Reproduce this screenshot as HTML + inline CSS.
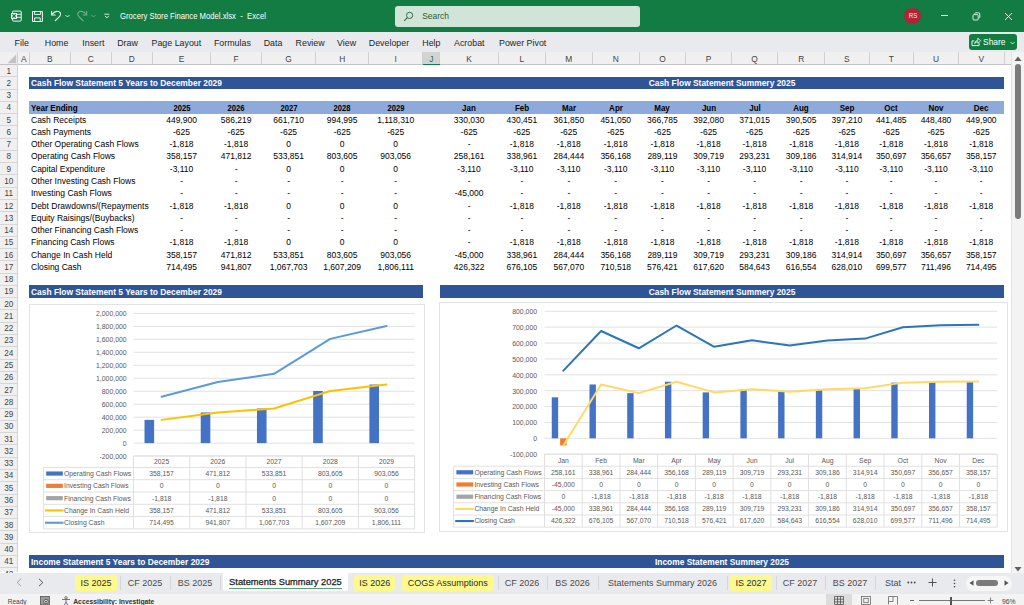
<!DOCTYPE html>
<html><head><meta charset="utf-8"><style>
html,body{margin:0;padding:0}
body{width:1024px;height:605px;overflow:hidden;position:relative;background:#fff;font-family:"Liberation Sans", sans-serif}
.t{position:absolute;white-space:nowrap;line-height:12px}
</style></head><body>
<div style="position:absolute;left:0.00px;top:0.00px;width:1024.00px;height:31.70px;background:#137c42"></div>
<svg style="position:absolute;left:10px;top:10px" width="12" height="12" viewBox="0 0 12 12">
<rect x="2.6" y="1.1" width="8.6" height="10" rx="0.9" fill="none" stroke="#fff" stroke-width="0.95"/>
<line x1="6.8" y1="4.3" x2="11.1" y2="4.3" stroke="#fff" stroke-width="0.9"/><line x1="6.8" y1="7.3" x2="11.1" y2="7.3" stroke="#fff" stroke-width="0.9"/>
<rect x="1" y="3" width="6.1" height="5.9" fill="#fff"/>
<path d="M2.3 4.1 L5.8 7.8 M5.8 4.1 L2.3 7.8" stroke="#137c42" stroke-width="1.3"/>
</svg>
<svg style="position:absolute;left:32px;top:10.5px" width="11" height="11" viewBox="0 0 11 11">
<path d="M0.5 0.5 H10.4 V10.5 H0.5 Z" fill="none" stroke="#fff" stroke-width="0.95"/>
<path d="M2.5 0.5 V3.4 H8.6 V0.5" fill="none" stroke="#fff" stroke-width="0.9"/>
<path d="M2.6 10.5 V6.9 H8.2 V10.5" fill="none" stroke="#fff" stroke-width="0.9"/>
</svg>
<svg style="position:absolute;left:50px;top:9px" width="13" height="13" viewBox="0 0 13 13">
<path d="M1.6 2.1 V6 H5.6" fill="none" stroke="#fff" stroke-width="1.05"/>
<path d="M2.3 5.3 C4.3 1.7 9.6 1.3 10.5 4.6 C10.8 5.7 10.3 6.6 9.7 7.3 L4.9 12" fill="none" stroke="#fff" stroke-width="1.05"/>
</svg>
<svg style="position:absolute;left:65px;top:14px" width="5" height="4" viewBox="0 0 5 4"><path d="M0.5 1 L2.5 3 L4.5 1" fill="none" stroke="#fff" stroke-width="0.8"/></svg>
<svg style="position:absolute;left:76px;top:9px;opacity:0.42" width="13" height="13" viewBox="0 0 13 13">
<path d="M10.7 2.1 V6 H6.7" fill="none" stroke="#fff" stroke-width="1.05"/>
<path d="M10 5.3 C8 1.7 2.7 1.3 1.8 4.6 C1.5 5.7 2 6.6 2.6 7.3 L7.4 12" fill="none" stroke="#fff" stroke-width="1.05"/>
</svg>
<svg style="position:absolute;left:91px;top:14px;opacity:0.42" width="5" height="4" viewBox="0 0 5 4"><path d="M0.5 1 L2.5 3 L4.5 1" fill="none" stroke="#fff" stroke-width="0.8"/></svg>
<svg style="position:absolute;left:104px;top:13px" width="6" height="7" viewBox="0 0 6 7"><line x1="0.4" y1="1.2" x2="5.4" y2="1.2" stroke="#fff" stroke-width="0.8"/><path d="M1 2.9 L2.9 4.8 L4.8 2.9" fill="none" stroke="#fff" stroke-width="0.9"/></svg>
<div class="t" style="left:119.80px;top:10.00px;font-size:8.8px;color:#fff;font-weight:normal;transform:scaleX(0.875);transform-origin:0 0;line-height:12px">Grocery Store Finance Model.xlsx&nbsp;&nbsp;-&nbsp;&nbsp;Excel</div>
<div style="position:absolute;left:395.00px;top:5.50px;width:245.00px;height:21.00px;background:#d0e5d7;border-radius:3px"></div>
<svg style="position:absolute;left:403px;top:11px" width="11" height="11" viewBox="0 0 11 11"><circle cx="6.6" cy="4.4" r="3.1" fill="none" stroke="#2f6b45" stroke-width="1"/><line x1="4.4" y1="6.6" x2="1.2" y2="9.8" stroke="#2f6b45" stroke-width="1.1"/></svg>
<div class="t" style="left:422.20px;top:10.00px;font-size:8.46px;color:#2c5a3c;font-weight:normal;line-height:12px">Search</div>
<div style="position:absolute;left:904.4px;top:7.8px;width:16.2px;height:16.2px;border-radius:50%;background:#ad2637"></div>
<div class="t" style="left:902.50px;top:10.20px;width:20px;text-align:center;font-size:7.2px;color:#fbeef0;font-weight:normal;transform:scaleX(0.85);transform-origin:50% 0;line-height:12px">RS</div>
<div style="position:absolute;left:941.20px;top:15.20px;width:6.80px;height:0.90px;background:#fff"></div>
<svg style="position:absolute;left:972px;top:12px" width="9" height="9" viewBox="0 0 9 9"><rect x="1" y="2.6" width="5.2" height="5.4" rx="1" fill="none" stroke="#fff" stroke-width="0.85"/><path d="M2.6 1.6 Q2.8 0.8 3.8 0.8 H6.6 Q7.8 0.8 7.8 2 V5 Q7.8 6 7.2 6.3" fill="none" stroke="#fff" stroke-width="0.85"/></svg>
<svg style="position:absolute;left:1004px;top:12px" width="9" height="9" viewBox="0 0 9 9"><path d="M1 1 L8 8 M8 1 L1 8" stroke="#fff" stroke-width="0.9"/></svg>
<div style="position:absolute;left:0.00px;top:31.70px;width:1024.00px;height:20.50px;background:#e9eaed"></div>
<div class="t" style="left:14.60px;top:36.60px;font-size:8.87px;color:#262626;font-weight:normal;line-height:12px">File</div>
<div class="t" style="left:44.80px;top:36.60px;font-size:8.87px;color:#262626;font-weight:normal;line-height:12px">Home</div>
<div class="t" style="left:82.30px;top:36.60px;font-size:8.87px;color:#262626;font-weight:normal;line-height:12px">Insert</div>
<div class="t" style="left:117.20px;top:36.60px;font-size:8.87px;color:#262626;font-weight:normal;line-height:12px">Draw</div>
<div class="t" style="left:151.50px;top:36.60px;font-size:8.87px;color:#262626;font-weight:normal;line-height:12px">Page Layout</div>
<div class="t" style="left:213.90px;top:36.60px;font-size:8.87px;color:#262626;font-weight:normal;line-height:12px">Formulas</div>
<div class="t" style="left:263.70px;top:36.60px;font-size:8.87px;color:#262626;font-weight:normal;line-height:12px">Data</div>
<div class="t" style="left:295.60px;top:36.60px;font-size:8.87px;color:#262626;font-weight:normal;line-height:12px">Review</div>
<div class="t" style="left:337.00px;top:36.60px;font-size:8.87px;color:#262626;font-weight:normal;line-height:12px">View</div>
<div class="t" style="left:368.80px;top:36.60px;font-size:8.87px;color:#262626;font-weight:normal;line-height:12px">Developer</div>
<div class="t" style="left:422.30px;top:36.60px;font-size:8.87px;color:#262626;font-weight:normal;line-height:12px">Help</div>
<div class="t" style="left:454.00px;top:36.60px;font-size:8.87px;color:#262626;font-weight:normal;line-height:12px">Acrobat</div>
<div class="t" style="left:499.00px;top:36.60px;font-size:8.87px;color:#262626;font-weight:normal;line-height:12px">Power Pivot</div>
<div style="position:absolute;left:969.00px;top:34.00px;width:47.70px;height:16.00px;background:#107c41;border-radius:3px"></div>
<svg style="position:absolute;left:970px;top:36px" width="12" height="12" viewBox="0 0 12 12"><path d="M2 4.9 H4.3 M2 4.9 V9.6 H9.1 V7.2" fill="none" stroke="#fff" stroke-width="0.9"/><path d="M4.6 7.6 Q5.2 4.7 7.9 4.1 V2.2 L10.6 4.9 L7.9 7.4 V5.6 Q5.9 5.8 4.6 7.6 Z" fill="none" stroke="#fff" stroke-width="0.85" stroke-linejoin="round"/></svg>
<div class="t" style="left:983.00px;top:36.30px;font-size:9.2px;color:#fff;font-weight:normal;transform:scaleX(0.92);transform-origin:0 0;line-height:12px">Share</div>
<svg style="position:absolute;left:1010px;top:41px" width="5" height="4" viewBox="0 0 5 4"><path d="M0.5 1 L2.5 3 L4.5 1" fill="none" stroke="#fff" stroke-width="0.8"/></svg>
<div style="position:absolute;left:0.00px;top:52.00px;width:1011.00px;height:12.90px;background:#f0f0f0"></div>
<div style="position:absolute;left:0.00px;top:64.10px;width:1011.00px;height:0.90px;background:#c4c4c4"></div>
<svg style="position:absolute;left:7px;top:54px" width="10" height="10" viewBox="0 0 10 10"><path d="M9.2 0.5 V9.2 H0.5 Z" fill="#c2c2c2"/></svg>
<div style="position:absolute;left:17.10px;top:52.00px;width:0.80px;height:520.00px;background:#d2d2d2"></div>
<div style="position:absolute;left:29.00px;top:52.00px;width:0.80px;height:12.20px;background:#d0d0d0"></div>
<div class="t" style="left:-6.30px;top:52.60px;width:60px;text-align:center;font-size:8.4px;color:#444;font-weight:normal;line-height:12px">A</div>
<div style="position:absolute;left:69.90px;top:52.00px;width:0.80px;height:12.20px;background:#d0d0d0"></div>
<div class="t" style="left:19.85px;top:52.60px;width:60px;text-align:center;font-size:8.4px;color:#444;font-weight:normal;line-height:12px">B</div>
<div style="position:absolute;left:110.80px;top:52.00px;width:0.80px;height:12.20px;background:#d0d0d0"></div>
<div class="t" style="left:60.75px;top:52.60px;width:60px;text-align:center;font-size:8.4px;color:#444;font-weight:normal;line-height:12px">C</div>
<div style="position:absolute;left:152.10px;top:52.00px;width:0.80px;height:12.20px;background:#d0d0d0"></div>
<div class="t" style="left:101.85px;top:52.60px;width:60px;text-align:center;font-size:8.4px;color:#444;font-weight:normal;line-height:12px">D</div>
<div style="position:absolute;left:210.20px;top:52.00px;width:0.80px;height:12.20px;background:#d0d0d0"></div>
<div class="t" style="left:151.55px;top:52.60px;width:60px;text-align:center;font-size:8.4px;color:#444;font-weight:normal;line-height:12px">E</div>
<div style="position:absolute;left:261.20px;top:52.00px;width:0.80px;height:12.20px;background:#d0d0d0"></div>
<div class="t" style="left:206.10px;top:52.60px;width:60px;text-align:center;font-size:8.4px;color:#444;font-weight:normal;line-height:12px">F</div>
<div style="position:absolute;left:315.20px;top:52.00px;width:0.80px;height:12.20px;background:#d0d0d0"></div>
<div class="t" style="left:258.60px;top:52.60px;width:60px;text-align:center;font-size:8.4px;color:#444;font-weight:normal;line-height:12px">G</div>
<div style="position:absolute;left:368.35px;top:52.00px;width:0.80px;height:12.20px;background:#d0d0d0"></div>
<div class="t" style="left:312.18px;top:52.60px;width:60px;text-align:center;font-size:8.4px;color:#444;font-weight:normal;line-height:12px">H</div>
<div style="position:absolute;left:422.30px;top:52.00px;width:0.80px;height:12.20px;background:#d0d0d0"></div>
<div class="t" style="left:365.73px;top:52.60px;width:60px;text-align:center;font-size:8.4px;color:#444;font-weight:normal;line-height:12px">I</div>
<div style="position:absolute;left:422.70px;top:52.00px;width:17.10px;height:12.20px;background:#d3d3d3"></div>
<div style="position:absolute;left:422.70px;top:63.80px;width:17.10px;height:1.20px;background:#107c41"></div>
<div style="position:absolute;left:439.40px;top:52.00px;width:0.80px;height:12.20px;background:#d0d0d0"></div>
<div class="t" style="left:401.25px;top:52.60px;width:60px;text-align:center;font-size:8.4px;color:#3b6e4c;font-weight:normal;line-height:12px">J</div>
<div style="position:absolute;left:498.00px;top:52.00px;width:0.80px;height:12.20px;background:#d0d0d0"></div>
<div class="t" style="left:439.10px;top:52.60px;width:60px;text-align:center;font-size:8.4px;color:#444;font-weight:normal;line-height:12px">K</div>
<div style="position:absolute;left:544.90px;top:52.00px;width:0.80px;height:12.20px;background:#d0d0d0"></div>
<div class="t" style="left:491.85px;top:52.60px;width:60px;text-align:center;font-size:8.4px;color:#444;font-weight:normal;line-height:12px">L</div>
<div style="position:absolute;left:591.90px;top:52.00px;width:0.80px;height:12.20px;background:#d0d0d0"></div>
<div class="t" style="left:538.80px;top:52.60px;width:60px;text-align:center;font-size:8.4px;color:#444;font-weight:normal;line-height:12px">M</div>
<div style="position:absolute;left:638.80px;top:52.00px;width:0.80px;height:12.20px;background:#d0d0d0"></div>
<div class="t" style="left:585.75px;top:52.60px;width:60px;text-align:center;font-size:8.4px;color:#444;font-weight:normal;line-height:12px">N</div>
<div style="position:absolute;left:685.30px;top:52.00px;width:0.80px;height:12.20px;background:#d0d0d0"></div>
<div class="t" style="left:632.45px;top:52.60px;width:60px;text-align:center;font-size:8.4px;color:#444;font-weight:normal;line-height:12px">O</div>
<div style="position:absolute;left:731.10px;top:52.00px;width:0.80px;height:12.20px;background:#d0d0d0"></div>
<div class="t" style="left:678.60px;top:52.60px;width:60px;text-align:center;font-size:8.4px;color:#444;font-weight:normal;line-height:12px">P</div>
<div style="position:absolute;left:777.30px;top:52.00px;width:0.80px;height:12.20px;background:#d0d0d0"></div>
<div class="t" style="left:724.60px;top:52.60px;width:60px;text-align:center;font-size:8.4px;color:#444;font-weight:normal;line-height:12px">Q</div>
<div style="position:absolute;left:824.30px;top:52.00px;width:0.80px;height:12.20px;background:#d0d0d0"></div>
<div class="t" style="left:771.20px;top:52.60px;width:60px;text-align:center;font-size:8.4px;color:#444;font-weight:normal;line-height:12px">R</div>
<div style="position:absolute;left:868.70px;top:52.00px;width:0.80px;height:12.20px;background:#d0d0d0"></div>
<div class="t" style="left:816.90px;top:52.60px;width:60px;text-align:center;font-size:8.4px;color:#444;font-weight:normal;line-height:12px">S</div>
<div style="position:absolute;left:913.00px;top:52.00px;width:0.80px;height:12.20px;background:#d0d0d0"></div>
<div class="t" style="left:861.25px;top:52.60px;width:60px;text-align:center;font-size:8.4px;color:#444;font-weight:normal;line-height:12px">T</div>
<div style="position:absolute;left:958.20px;top:52.00px;width:0.80px;height:12.20px;background:#d0d0d0"></div>
<div class="t" style="left:906.00px;top:52.60px;width:60px;text-align:center;font-size:8.4px;color:#444;font-weight:normal;line-height:12px">U</div>
<div style="position:absolute;left:1003.50px;top:52.00px;width:0.80px;height:12.20px;background:#d0d0d0"></div>
<div class="t" style="left:951.25px;top:52.60px;width:60px;text-align:center;font-size:8.4px;color:#444;font-weight:normal;line-height:12px">V</div>
<div class="t" style="left:1001.95px;top:52.60px;width:60px;text-align:center;font-size:8.4px;color:#444;font-weight:normal;line-height:12px">W</div>
<div style="position:absolute;left:0.00px;top:64.90px;width:17.10px;height:507.10px;background:#f0f0f0"></div>
<div style="position:absolute;left:0.00px;top:76.32px;width:17.10px;height:0.80px;background:#d6d6d6"></div>
<div class="t" style="left:-6.20px;top:65.55px;width:30px;text-align:center;font-size:8.2px;color:#444;font-weight:normal;line-height:12px">1</div>
<div style="position:absolute;left:0.00px;top:88.59px;width:17.10px;height:0.80px;background:#d6d6d6"></div>
<div class="t" style="left:-6.20px;top:77.82px;width:30px;text-align:center;font-size:8.2px;color:#444;font-weight:normal;line-height:12px">2</div>
<div style="position:absolute;left:0.00px;top:100.86px;width:17.10px;height:0.80px;background:#d6d6d6"></div>
<div class="t" style="left:-6.20px;top:90.09px;width:30px;text-align:center;font-size:8.2px;color:#444;font-weight:normal;line-height:12px">3</div>
<div style="position:absolute;left:0.00px;top:113.13px;width:17.10px;height:0.80px;background:#d6d6d6"></div>
<div class="t" style="left:-6.20px;top:102.36px;width:30px;text-align:center;font-size:8.2px;color:#444;font-weight:normal;line-height:12px">4</div>
<div style="position:absolute;left:0.00px;top:125.40px;width:17.10px;height:0.80px;background:#d6d6d6"></div>
<div class="t" style="left:-6.20px;top:114.63px;width:30px;text-align:center;font-size:8.2px;color:#444;font-weight:normal;line-height:12px">5</div>
<div style="position:absolute;left:0.00px;top:137.67px;width:17.10px;height:0.80px;background:#d6d6d6"></div>
<div class="t" style="left:-6.20px;top:126.90px;width:30px;text-align:center;font-size:8.2px;color:#444;font-weight:normal;line-height:12px">6</div>
<div style="position:absolute;left:0.00px;top:149.94px;width:17.10px;height:0.80px;background:#d6d6d6"></div>
<div class="t" style="left:-6.20px;top:139.17px;width:30px;text-align:center;font-size:8.2px;color:#444;font-weight:normal;line-height:12px">7</div>
<div style="position:absolute;left:0.00px;top:162.21px;width:17.10px;height:0.80px;background:#d6d6d6"></div>
<div class="t" style="left:-6.20px;top:151.44px;width:30px;text-align:center;font-size:8.2px;color:#444;font-weight:normal;line-height:12px">8</div>
<div style="position:absolute;left:0.00px;top:174.48px;width:17.10px;height:0.80px;background:#d6d6d6"></div>
<div class="t" style="left:-6.20px;top:163.71px;width:30px;text-align:center;font-size:8.2px;color:#444;font-weight:normal;line-height:12px">9</div>
<div style="position:absolute;left:0.00px;top:186.75px;width:17.10px;height:0.80px;background:#d6d6d6"></div>
<div class="t" style="left:-6.20px;top:175.98px;width:30px;text-align:center;font-size:8.2px;color:#444;font-weight:normal;line-height:12px">10</div>
<div style="position:absolute;left:0.00px;top:199.02px;width:17.10px;height:0.80px;background:#d6d6d6"></div>
<div class="t" style="left:-6.20px;top:188.25px;width:30px;text-align:center;font-size:8.2px;color:#444;font-weight:normal;line-height:12px">11</div>
<div style="position:absolute;left:0.00px;top:211.29px;width:17.10px;height:0.80px;background:#d6d6d6"></div>
<div class="t" style="left:-6.20px;top:200.52px;width:30px;text-align:center;font-size:8.2px;color:#444;font-weight:normal;line-height:12px">12</div>
<div style="position:absolute;left:0.00px;top:223.56px;width:17.10px;height:0.80px;background:#d6d6d6"></div>
<div class="t" style="left:-6.20px;top:212.79px;width:30px;text-align:center;font-size:8.2px;color:#444;font-weight:normal;line-height:12px">13</div>
<div style="position:absolute;left:0.00px;top:235.83px;width:17.10px;height:0.80px;background:#d6d6d6"></div>
<div class="t" style="left:-6.20px;top:225.06px;width:30px;text-align:center;font-size:8.2px;color:#444;font-weight:normal;line-height:12px">14</div>
<div style="position:absolute;left:0.00px;top:248.10px;width:17.10px;height:0.80px;background:#d6d6d6"></div>
<div class="t" style="left:-6.20px;top:237.33px;width:30px;text-align:center;font-size:8.2px;color:#444;font-weight:normal;line-height:12px">15</div>
<div style="position:absolute;left:0.00px;top:260.37px;width:17.10px;height:0.80px;background:#d6d6d6"></div>
<div class="t" style="left:-6.20px;top:249.60px;width:30px;text-align:center;font-size:8.2px;color:#444;font-weight:normal;line-height:12px">16</div>
<div style="position:absolute;left:0.00px;top:272.64px;width:17.10px;height:0.80px;background:#d6d6d6"></div>
<div class="t" style="left:-6.20px;top:261.87px;width:30px;text-align:center;font-size:8.2px;color:#444;font-weight:normal;line-height:12px">17</div>
<div style="position:absolute;left:0.00px;top:284.91px;width:17.10px;height:0.80px;background:#d6d6d6"></div>
<div class="t" style="left:-6.20px;top:274.14px;width:30px;text-align:center;font-size:8.2px;color:#444;font-weight:normal;line-height:12px">18</div>
<div style="position:absolute;left:0.00px;top:297.18px;width:17.10px;height:0.80px;background:#d6d6d6"></div>
<div class="t" style="left:-6.20px;top:286.41px;width:30px;text-align:center;font-size:8.2px;color:#444;font-weight:normal;line-height:12px">19</div>
<div style="position:absolute;left:0.00px;top:309.45px;width:17.10px;height:0.80px;background:#d6d6d6"></div>
<div class="t" style="left:-6.20px;top:298.68px;width:30px;text-align:center;font-size:8.2px;color:#444;font-weight:normal;line-height:12px">20</div>
<div style="position:absolute;left:0.00px;top:321.72px;width:17.10px;height:0.80px;background:#d6d6d6"></div>
<div class="t" style="left:-6.20px;top:310.95px;width:30px;text-align:center;font-size:8.2px;color:#444;font-weight:normal;line-height:12px">21</div>
<div style="position:absolute;left:0.00px;top:333.99px;width:17.10px;height:0.80px;background:#d6d6d6"></div>
<div class="t" style="left:-6.20px;top:323.22px;width:30px;text-align:center;font-size:8.2px;color:#444;font-weight:normal;line-height:12px">22</div>
<div style="position:absolute;left:0.00px;top:346.26px;width:17.10px;height:0.80px;background:#d6d6d6"></div>
<div class="t" style="left:-6.20px;top:335.49px;width:30px;text-align:center;font-size:8.2px;color:#444;font-weight:normal;line-height:12px">23</div>
<div style="position:absolute;left:0.00px;top:358.53px;width:17.10px;height:0.80px;background:#d6d6d6"></div>
<div class="t" style="left:-6.20px;top:347.76px;width:30px;text-align:center;font-size:8.2px;color:#444;font-weight:normal;line-height:12px">24</div>
<div style="position:absolute;left:0.00px;top:370.80px;width:17.10px;height:0.80px;background:#d6d6d6"></div>
<div class="t" style="left:-6.20px;top:360.03px;width:30px;text-align:center;font-size:8.2px;color:#444;font-weight:normal;line-height:12px">25</div>
<div style="position:absolute;left:0.00px;top:383.07px;width:17.10px;height:0.80px;background:#d6d6d6"></div>
<div class="t" style="left:-6.20px;top:372.30px;width:30px;text-align:center;font-size:8.2px;color:#444;font-weight:normal;line-height:12px">26</div>
<div style="position:absolute;left:0.00px;top:395.34px;width:17.10px;height:0.80px;background:#d6d6d6"></div>
<div class="t" style="left:-6.20px;top:384.57px;width:30px;text-align:center;font-size:8.2px;color:#444;font-weight:normal;line-height:12px">27</div>
<div style="position:absolute;left:0.00px;top:407.61px;width:17.10px;height:0.80px;background:#d6d6d6"></div>
<div class="t" style="left:-6.20px;top:396.84px;width:30px;text-align:center;font-size:8.2px;color:#444;font-weight:normal;line-height:12px">28</div>
<div style="position:absolute;left:0.00px;top:419.88px;width:17.10px;height:0.80px;background:#d6d6d6"></div>
<div class="t" style="left:-6.20px;top:409.11px;width:30px;text-align:center;font-size:8.2px;color:#444;font-weight:normal;line-height:12px">29</div>
<div style="position:absolute;left:0.00px;top:432.15px;width:17.10px;height:0.80px;background:#d6d6d6"></div>
<div class="t" style="left:-6.20px;top:421.38px;width:30px;text-align:center;font-size:8.2px;color:#444;font-weight:normal;line-height:12px">30</div>
<div style="position:absolute;left:0.00px;top:444.42px;width:17.10px;height:0.80px;background:#d6d6d6"></div>
<div class="t" style="left:-6.20px;top:433.65px;width:30px;text-align:center;font-size:8.2px;color:#444;font-weight:normal;line-height:12px">31</div>
<div style="position:absolute;left:0.00px;top:456.69px;width:17.10px;height:0.80px;background:#d6d6d6"></div>
<div class="t" style="left:-6.20px;top:445.92px;width:30px;text-align:center;font-size:8.2px;color:#444;font-weight:normal;line-height:12px">32</div>
<div style="position:absolute;left:0.00px;top:468.96px;width:17.10px;height:0.80px;background:#d6d6d6"></div>
<div class="t" style="left:-6.20px;top:458.19px;width:30px;text-align:center;font-size:8.2px;color:#444;font-weight:normal;line-height:12px">33</div>
<div style="position:absolute;left:0.00px;top:481.23px;width:17.10px;height:0.80px;background:#d6d6d6"></div>
<div class="t" style="left:-6.20px;top:470.46px;width:30px;text-align:center;font-size:8.2px;color:#444;font-weight:normal;line-height:12px">34</div>
<div style="position:absolute;left:0.00px;top:493.50px;width:17.10px;height:0.80px;background:#d6d6d6"></div>
<div class="t" style="left:-6.20px;top:482.73px;width:30px;text-align:center;font-size:8.2px;color:#444;font-weight:normal;line-height:12px">35</div>
<div style="position:absolute;left:0.00px;top:505.77px;width:17.10px;height:0.80px;background:#d6d6d6"></div>
<div class="t" style="left:-6.20px;top:495.00px;width:30px;text-align:center;font-size:8.2px;color:#444;font-weight:normal;line-height:12px">36</div>
<div style="position:absolute;left:0.00px;top:518.04px;width:17.10px;height:0.80px;background:#d6d6d6"></div>
<div class="t" style="left:-6.20px;top:507.27px;width:30px;text-align:center;font-size:8.2px;color:#444;font-weight:normal;line-height:12px">37</div>
<div style="position:absolute;left:0.00px;top:530.31px;width:17.10px;height:0.80px;background:#d6d6d6"></div>
<div class="t" style="left:-6.20px;top:519.54px;width:30px;text-align:center;font-size:8.2px;color:#444;font-weight:normal;line-height:12px">38</div>
<div style="position:absolute;left:0.00px;top:542.58px;width:17.10px;height:0.80px;background:#d6d6d6"></div>
<div class="t" style="left:-6.20px;top:531.81px;width:30px;text-align:center;font-size:8.2px;color:#444;font-weight:normal;line-height:12px">39</div>
<div style="position:absolute;left:0.00px;top:554.85px;width:17.10px;height:0.80px;background:#d6d6d6"></div>
<div class="t" style="left:-6.20px;top:544.08px;width:30px;text-align:center;font-size:8.2px;color:#444;font-weight:normal;line-height:12px">40</div>
<div style="position:absolute;left:0.00px;top:567.12px;width:17.10px;height:0.80px;background:#d6d6d6"></div>
<div class="t" style="left:-6.20px;top:556.35px;width:30px;text-align:center;font-size:8.2px;color:#444;font-weight:normal;line-height:12px">41</div>
<div style="position:absolute;left:0.00px;top:579.39px;width:17.10px;height:0.80px;background:#d6d6d6"></div>
<div class="t" style="left:-6.20px;top:568.62px;width:30px;text-align:center;font-size:8.2px;color:#444;font-weight:normal;line-height:12px">42</div>
<div style="position:absolute;left:29.40px;top:76.82px;width:974.50px;height:12.27px;background:#2f5597"></div>
<div class="t" style="left:30.90px;top:77.22px;font-size:9.2px;color:#fff;font-weight:bold;transform:scaleX(0.915);transform-origin:0 0;line-height:12px">Cash Flow Statement 5 Years to December 2029</div>
<div class="t" style="left:571.85px;top:77.22px;width:300px;text-align:center;font-size:9.2px;color:#fff;font-weight:bold;transform:scaleX(0.915);transform-origin:50% 0;line-height:12px">Cash Flow Statement Summery 2025</div>
<div style="position:absolute;left:29.40px;top:101.36px;width:974.50px;height:12.27px;background:#8eaadb"></div>
<div class="t" style="left:31.00px;top:102.16px;font-size:8.9px;color:#000;font-weight:bold;line-height:12px;transform:scaleX(0.91);transform-origin:0 0">Year Ending</div>
<div class="t" style="left:151.55px;top:102.16px;width:60px;text-align:center;font-size:8.9px;color:#000;font-weight:bold;line-height:12px;transform:scaleX(0.86)">2025</div>
<div class="t" style="left:206.10px;top:102.16px;width:60px;text-align:center;font-size:8.9px;color:#000;font-weight:bold;line-height:12px;transform:scaleX(0.86)">2026</div>
<div class="t" style="left:258.60px;top:102.16px;width:60px;text-align:center;font-size:8.9px;color:#000;font-weight:bold;line-height:12px;transform:scaleX(0.86)">2027</div>
<div class="t" style="left:312.18px;top:102.16px;width:60px;text-align:center;font-size:8.9px;color:#000;font-weight:bold;line-height:12px;transform:scaleX(0.86)">2028</div>
<div class="t" style="left:365.73px;top:102.16px;width:60px;text-align:center;font-size:8.9px;color:#000;font-weight:bold;line-height:12px;transform:scaleX(0.86)">2029</div>
<div class="t" style="left:439.10px;top:102.16px;width:60px;text-align:center;font-size:8.9px;color:#000;font-weight:bold;line-height:12px;transform:scaleX(0.9)">Jan</div>
<div class="t" style="left:491.85px;top:102.16px;width:60px;text-align:center;font-size:8.9px;color:#000;font-weight:bold;line-height:12px;transform:scaleX(0.9)">Feb</div>
<div class="t" style="left:538.80px;top:102.16px;width:60px;text-align:center;font-size:8.9px;color:#000;font-weight:bold;line-height:12px;transform:scaleX(0.9)">Mar</div>
<div class="t" style="left:585.75px;top:102.16px;width:60px;text-align:center;font-size:8.9px;color:#000;font-weight:bold;line-height:12px;transform:scaleX(0.9)">Apr</div>
<div class="t" style="left:632.45px;top:102.16px;width:60px;text-align:center;font-size:8.9px;color:#000;font-weight:bold;line-height:12px;transform:scaleX(0.9)">May</div>
<div class="t" style="left:678.60px;top:102.16px;width:60px;text-align:center;font-size:8.9px;color:#000;font-weight:bold;line-height:12px;transform:scaleX(0.9)">Jun</div>
<div class="t" style="left:724.60px;top:102.16px;width:60px;text-align:center;font-size:8.9px;color:#000;font-weight:bold;line-height:12px;transform:scaleX(0.9)">Jul</div>
<div class="t" style="left:771.20px;top:102.16px;width:60px;text-align:center;font-size:8.9px;color:#000;font-weight:bold;line-height:12px;transform:scaleX(0.9)">Aug</div>
<div class="t" style="left:816.90px;top:102.16px;width:60px;text-align:center;font-size:8.9px;color:#000;font-weight:bold;line-height:12px;transform:scaleX(0.9)">Sep</div>
<div class="t" style="left:861.25px;top:102.16px;width:60px;text-align:center;font-size:8.9px;color:#000;font-weight:bold;line-height:12px;transform:scaleX(0.9)">Oct</div>
<div class="t" style="left:906.00px;top:102.16px;width:60px;text-align:center;font-size:8.9px;color:#000;font-weight:bold;line-height:12px;transform:scaleX(0.9)">Nov</div>
<div class="t" style="left:951.25px;top:102.16px;width:60px;text-align:center;font-size:8.9px;color:#000;font-weight:bold;line-height:12px;transform:scaleX(0.9)">Dec</div>
<div class="t" style="left:31.00px;top:113.68px;font-size:8.5px;color:#000;font-weight:normal;line-height:12px">Cash Receipts</div>
<div class="t" style="left:151.55px;top:113.68px;width:60px;text-align:center;font-size:8.5px;color:#000;font-weight:normal;line-height:12px">449,900</div>
<div class="t" style="left:206.10px;top:113.68px;width:60px;text-align:center;font-size:8.5px;color:#000;font-weight:normal;line-height:12px">586,219</div>
<div class="t" style="left:258.60px;top:113.68px;width:60px;text-align:center;font-size:8.5px;color:#000;font-weight:normal;line-height:12px">661,710</div>
<div class="t" style="left:312.18px;top:113.68px;width:60px;text-align:center;font-size:8.5px;color:#000;font-weight:normal;line-height:12px">994,995</div>
<div class="t" style="left:365.73px;top:113.68px;width:60px;text-align:center;font-size:8.5px;color:#000;font-weight:normal;line-height:12px">1,118,310</div>
<div class="t" style="left:439.10px;top:113.68px;width:60px;text-align:center;font-size:8.5px;color:#000;font-weight:normal;line-height:12px">330,030</div>
<div class="t" style="left:491.85px;top:113.68px;width:60px;text-align:center;font-size:8.5px;color:#000;font-weight:normal;line-height:12px">430,451</div>
<div class="t" style="left:538.80px;top:113.68px;width:60px;text-align:center;font-size:8.5px;color:#000;font-weight:normal;line-height:12px">361,850</div>
<div class="t" style="left:585.75px;top:113.68px;width:60px;text-align:center;font-size:8.5px;color:#000;font-weight:normal;line-height:12px">451,050</div>
<div class="t" style="left:632.45px;top:113.68px;width:60px;text-align:center;font-size:8.5px;color:#000;font-weight:normal;line-height:12px">366,785</div>
<div class="t" style="left:678.60px;top:113.68px;width:60px;text-align:center;font-size:8.5px;color:#000;font-weight:normal;line-height:12px">392,080</div>
<div class="t" style="left:724.60px;top:113.68px;width:60px;text-align:center;font-size:8.5px;color:#000;font-weight:normal;line-height:12px">371,015</div>
<div class="t" style="left:771.20px;top:113.68px;width:60px;text-align:center;font-size:8.5px;color:#000;font-weight:normal;line-height:12px">390,505</div>
<div class="t" style="left:816.90px;top:113.68px;width:60px;text-align:center;font-size:8.5px;color:#000;font-weight:normal;line-height:12px">397,210</div>
<div class="t" style="left:861.25px;top:113.68px;width:60px;text-align:center;font-size:8.5px;color:#000;font-weight:normal;line-height:12px">441,485</div>
<div class="t" style="left:906.00px;top:113.68px;width:60px;text-align:center;font-size:8.5px;color:#000;font-weight:normal;line-height:12px">448,480</div>
<div class="t" style="left:951.25px;top:113.68px;width:60px;text-align:center;font-size:8.5px;color:#000;font-weight:normal;line-height:12px">449,900</div>
<div class="t" style="left:31.00px;top:125.95px;font-size:8.5px;color:#000;font-weight:normal;line-height:12px">Cash Payments</div>
<div class="t" style="left:151.55px;top:125.95px;width:60px;text-align:center;font-size:8.5px;color:#000;font-weight:normal;line-height:12px">-625</div>
<div class="t" style="left:206.10px;top:125.95px;width:60px;text-align:center;font-size:8.5px;color:#000;font-weight:normal;line-height:12px">-625</div>
<div class="t" style="left:258.60px;top:125.95px;width:60px;text-align:center;font-size:8.5px;color:#000;font-weight:normal;line-height:12px">-625</div>
<div class="t" style="left:312.18px;top:125.95px;width:60px;text-align:center;font-size:8.5px;color:#000;font-weight:normal;line-height:12px">-625</div>
<div class="t" style="left:365.73px;top:125.95px;width:60px;text-align:center;font-size:8.5px;color:#000;font-weight:normal;line-height:12px">-625</div>
<div class="t" style="left:439.10px;top:125.95px;width:60px;text-align:center;font-size:8.5px;color:#000;font-weight:normal;line-height:12px">-625</div>
<div class="t" style="left:491.85px;top:125.95px;width:60px;text-align:center;font-size:8.5px;color:#000;font-weight:normal;line-height:12px">-625</div>
<div class="t" style="left:538.80px;top:125.95px;width:60px;text-align:center;font-size:8.5px;color:#000;font-weight:normal;line-height:12px">-625</div>
<div class="t" style="left:585.75px;top:125.95px;width:60px;text-align:center;font-size:8.5px;color:#000;font-weight:normal;line-height:12px">-625</div>
<div class="t" style="left:632.45px;top:125.95px;width:60px;text-align:center;font-size:8.5px;color:#000;font-weight:normal;line-height:12px">-625</div>
<div class="t" style="left:678.60px;top:125.95px;width:60px;text-align:center;font-size:8.5px;color:#000;font-weight:normal;line-height:12px">-625</div>
<div class="t" style="left:724.60px;top:125.95px;width:60px;text-align:center;font-size:8.5px;color:#000;font-weight:normal;line-height:12px">-625</div>
<div class="t" style="left:771.20px;top:125.95px;width:60px;text-align:center;font-size:8.5px;color:#000;font-weight:normal;line-height:12px">-625</div>
<div class="t" style="left:816.90px;top:125.95px;width:60px;text-align:center;font-size:8.5px;color:#000;font-weight:normal;line-height:12px">-625</div>
<div class="t" style="left:861.25px;top:125.95px;width:60px;text-align:center;font-size:8.5px;color:#000;font-weight:normal;line-height:12px">-625</div>
<div class="t" style="left:906.00px;top:125.95px;width:60px;text-align:center;font-size:8.5px;color:#000;font-weight:normal;line-height:12px">-625</div>
<div class="t" style="left:951.25px;top:125.95px;width:60px;text-align:center;font-size:8.5px;color:#000;font-weight:normal;line-height:12px">-625</div>
<div class="t" style="left:31.00px;top:138.22px;font-size:8.5px;color:#000;font-weight:normal;line-height:12px">Other Operating Cash Flows</div>
<div class="t" style="left:151.55px;top:138.22px;width:60px;text-align:center;font-size:8.5px;color:#000;font-weight:normal;line-height:12px">-1,818</div>
<div class="t" style="left:206.10px;top:138.22px;width:60px;text-align:center;font-size:8.5px;color:#000;font-weight:normal;line-height:12px">-1,818</div>
<div class="t" style="left:258.60px;top:138.22px;width:60px;text-align:center;font-size:8.5px;color:#000;font-weight:normal;line-height:12px">0</div>
<div class="t" style="left:312.18px;top:138.22px;width:60px;text-align:center;font-size:8.5px;color:#000;font-weight:normal;line-height:12px">0</div>
<div class="t" style="left:365.73px;top:138.22px;width:60px;text-align:center;font-size:8.5px;color:#000;font-weight:normal;line-height:12px">0</div>
<div class="t" style="left:439.10px;top:138.22px;width:60px;text-align:center;font-size:8.5px;color:#000;font-weight:normal;line-height:12px">-</div>
<div class="t" style="left:491.85px;top:138.22px;width:60px;text-align:center;font-size:8.5px;color:#000;font-weight:normal;line-height:12px">-1,818</div>
<div class="t" style="left:538.80px;top:138.22px;width:60px;text-align:center;font-size:8.5px;color:#000;font-weight:normal;line-height:12px">-1,818</div>
<div class="t" style="left:585.75px;top:138.22px;width:60px;text-align:center;font-size:8.5px;color:#000;font-weight:normal;line-height:12px">-1,818</div>
<div class="t" style="left:632.45px;top:138.22px;width:60px;text-align:center;font-size:8.5px;color:#000;font-weight:normal;line-height:12px">-1,818</div>
<div class="t" style="left:678.60px;top:138.22px;width:60px;text-align:center;font-size:8.5px;color:#000;font-weight:normal;line-height:12px">-1,818</div>
<div class="t" style="left:724.60px;top:138.22px;width:60px;text-align:center;font-size:8.5px;color:#000;font-weight:normal;line-height:12px">-1,818</div>
<div class="t" style="left:771.20px;top:138.22px;width:60px;text-align:center;font-size:8.5px;color:#000;font-weight:normal;line-height:12px">-1,818</div>
<div class="t" style="left:816.90px;top:138.22px;width:60px;text-align:center;font-size:8.5px;color:#000;font-weight:normal;line-height:12px">-1,818</div>
<div class="t" style="left:861.25px;top:138.22px;width:60px;text-align:center;font-size:8.5px;color:#000;font-weight:normal;line-height:12px">-1,818</div>
<div class="t" style="left:906.00px;top:138.22px;width:60px;text-align:center;font-size:8.5px;color:#000;font-weight:normal;line-height:12px">-1,818</div>
<div class="t" style="left:951.25px;top:138.22px;width:60px;text-align:center;font-size:8.5px;color:#000;font-weight:normal;line-height:12px">-1,818</div>
<div class="t" style="left:31.00px;top:150.49px;font-size:8.5px;color:#000;font-weight:normal;line-height:12px">Operating Cash Flows</div>
<div class="t" style="left:151.55px;top:150.49px;width:60px;text-align:center;font-size:8.5px;color:#000;font-weight:normal;line-height:12px">358,157</div>
<div class="t" style="left:206.10px;top:150.49px;width:60px;text-align:center;font-size:8.5px;color:#000;font-weight:normal;line-height:12px">471,812</div>
<div class="t" style="left:258.60px;top:150.49px;width:60px;text-align:center;font-size:8.5px;color:#000;font-weight:normal;line-height:12px">533,851</div>
<div class="t" style="left:312.18px;top:150.49px;width:60px;text-align:center;font-size:8.5px;color:#000;font-weight:normal;line-height:12px">803,605</div>
<div class="t" style="left:365.73px;top:150.49px;width:60px;text-align:center;font-size:8.5px;color:#000;font-weight:normal;line-height:12px">903,056</div>
<div class="t" style="left:439.10px;top:150.49px;width:60px;text-align:center;font-size:8.5px;color:#000;font-weight:normal;line-height:12px">258,161</div>
<div class="t" style="left:491.85px;top:150.49px;width:60px;text-align:center;font-size:8.5px;color:#000;font-weight:normal;line-height:12px">338,961</div>
<div class="t" style="left:538.80px;top:150.49px;width:60px;text-align:center;font-size:8.5px;color:#000;font-weight:normal;line-height:12px">284,444</div>
<div class="t" style="left:585.75px;top:150.49px;width:60px;text-align:center;font-size:8.5px;color:#000;font-weight:normal;line-height:12px">356,168</div>
<div class="t" style="left:632.45px;top:150.49px;width:60px;text-align:center;font-size:8.5px;color:#000;font-weight:normal;line-height:12px">289,119</div>
<div class="t" style="left:678.60px;top:150.49px;width:60px;text-align:center;font-size:8.5px;color:#000;font-weight:normal;line-height:12px">309,719</div>
<div class="t" style="left:724.60px;top:150.49px;width:60px;text-align:center;font-size:8.5px;color:#000;font-weight:normal;line-height:12px">293,231</div>
<div class="t" style="left:771.20px;top:150.49px;width:60px;text-align:center;font-size:8.5px;color:#000;font-weight:normal;line-height:12px">309,186</div>
<div class="t" style="left:816.90px;top:150.49px;width:60px;text-align:center;font-size:8.5px;color:#000;font-weight:normal;line-height:12px">314,914</div>
<div class="t" style="left:861.25px;top:150.49px;width:60px;text-align:center;font-size:8.5px;color:#000;font-weight:normal;line-height:12px">350,697</div>
<div class="t" style="left:906.00px;top:150.49px;width:60px;text-align:center;font-size:8.5px;color:#000;font-weight:normal;line-height:12px">356,657</div>
<div class="t" style="left:951.25px;top:150.49px;width:60px;text-align:center;font-size:8.5px;color:#000;font-weight:normal;line-height:12px">358,157</div>
<div class="t" style="left:31.00px;top:162.76px;font-size:8.5px;color:#000;font-weight:normal;line-height:12px">Capital Expenditure</div>
<div class="t" style="left:151.55px;top:162.76px;width:60px;text-align:center;font-size:8.5px;color:#000;font-weight:normal;line-height:12px">-3,110</div>
<div class="t" style="left:206.10px;top:162.76px;width:60px;text-align:center;font-size:8.5px;color:#000;font-weight:normal;line-height:12px">-</div>
<div class="t" style="left:258.60px;top:162.76px;width:60px;text-align:center;font-size:8.5px;color:#000;font-weight:normal;line-height:12px">0</div>
<div class="t" style="left:312.18px;top:162.76px;width:60px;text-align:center;font-size:8.5px;color:#000;font-weight:normal;line-height:12px">0</div>
<div class="t" style="left:365.73px;top:162.76px;width:60px;text-align:center;font-size:8.5px;color:#000;font-weight:normal;line-height:12px">0</div>
<div class="t" style="left:439.10px;top:162.76px;width:60px;text-align:center;font-size:8.5px;color:#000;font-weight:normal;line-height:12px">-3,110</div>
<div class="t" style="left:491.85px;top:162.76px;width:60px;text-align:center;font-size:8.5px;color:#000;font-weight:normal;line-height:12px">-3,110</div>
<div class="t" style="left:538.80px;top:162.76px;width:60px;text-align:center;font-size:8.5px;color:#000;font-weight:normal;line-height:12px">-3,110</div>
<div class="t" style="left:585.75px;top:162.76px;width:60px;text-align:center;font-size:8.5px;color:#000;font-weight:normal;line-height:12px">-3,110</div>
<div class="t" style="left:632.45px;top:162.76px;width:60px;text-align:center;font-size:8.5px;color:#000;font-weight:normal;line-height:12px">-3,110</div>
<div class="t" style="left:678.60px;top:162.76px;width:60px;text-align:center;font-size:8.5px;color:#000;font-weight:normal;line-height:12px">-3,110</div>
<div class="t" style="left:724.60px;top:162.76px;width:60px;text-align:center;font-size:8.5px;color:#000;font-weight:normal;line-height:12px">-3,110</div>
<div class="t" style="left:771.20px;top:162.76px;width:60px;text-align:center;font-size:8.5px;color:#000;font-weight:normal;line-height:12px">-3,110</div>
<div class="t" style="left:816.90px;top:162.76px;width:60px;text-align:center;font-size:8.5px;color:#000;font-weight:normal;line-height:12px">-3,110</div>
<div class="t" style="left:861.25px;top:162.76px;width:60px;text-align:center;font-size:8.5px;color:#000;font-weight:normal;line-height:12px">-3,110</div>
<div class="t" style="left:906.00px;top:162.76px;width:60px;text-align:center;font-size:8.5px;color:#000;font-weight:normal;line-height:12px">-3,110</div>
<div class="t" style="left:951.25px;top:162.76px;width:60px;text-align:center;font-size:8.5px;color:#000;font-weight:normal;line-height:12px">-3,110</div>
<div class="t" style="left:31.00px;top:175.03px;font-size:8.5px;color:#000;font-weight:normal;line-height:12px">Other Investing Cash Flows</div>
<div class="t" style="left:151.55px;top:175.03px;width:60px;text-align:center;font-size:8.5px;color:#000;font-weight:normal;line-height:12px">-</div>
<div class="t" style="left:206.10px;top:175.03px;width:60px;text-align:center;font-size:8.5px;color:#000;font-weight:normal;line-height:12px">-</div>
<div class="t" style="left:258.60px;top:175.03px;width:60px;text-align:center;font-size:8.5px;color:#000;font-weight:normal;line-height:12px">-</div>
<div class="t" style="left:312.18px;top:175.03px;width:60px;text-align:center;font-size:8.5px;color:#000;font-weight:normal;line-height:12px">-</div>
<div class="t" style="left:365.73px;top:175.03px;width:60px;text-align:center;font-size:8.5px;color:#000;font-weight:normal;line-height:12px">-</div>
<div class="t" style="left:439.10px;top:175.03px;width:60px;text-align:center;font-size:8.5px;color:#000;font-weight:normal;line-height:12px">-</div>
<div class="t" style="left:491.85px;top:175.03px;width:60px;text-align:center;font-size:8.5px;color:#000;font-weight:normal;line-height:12px">-</div>
<div class="t" style="left:538.80px;top:175.03px;width:60px;text-align:center;font-size:8.5px;color:#000;font-weight:normal;line-height:12px">-</div>
<div class="t" style="left:585.75px;top:175.03px;width:60px;text-align:center;font-size:8.5px;color:#000;font-weight:normal;line-height:12px">-</div>
<div class="t" style="left:632.45px;top:175.03px;width:60px;text-align:center;font-size:8.5px;color:#000;font-weight:normal;line-height:12px">-</div>
<div class="t" style="left:678.60px;top:175.03px;width:60px;text-align:center;font-size:8.5px;color:#000;font-weight:normal;line-height:12px">-</div>
<div class="t" style="left:724.60px;top:175.03px;width:60px;text-align:center;font-size:8.5px;color:#000;font-weight:normal;line-height:12px">-</div>
<div class="t" style="left:771.20px;top:175.03px;width:60px;text-align:center;font-size:8.5px;color:#000;font-weight:normal;line-height:12px">-</div>
<div class="t" style="left:816.90px;top:175.03px;width:60px;text-align:center;font-size:8.5px;color:#000;font-weight:normal;line-height:12px">-</div>
<div class="t" style="left:861.25px;top:175.03px;width:60px;text-align:center;font-size:8.5px;color:#000;font-weight:normal;line-height:12px">-</div>
<div class="t" style="left:906.00px;top:175.03px;width:60px;text-align:center;font-size:8.5px;color:#000;font-weight:normal;line-height:12px">-</div>
<div class="t" style="left:951.25px;top:175.03px;width:60px;text-align:center;font-size:8.5px;color:#000;font-weight:normal;line-height:12px">-</div>
<div class="t" style="left:31.00px;top:187.30px;font-size:8.5px;color:#000;font-weight:normal;line-height:12px">Investing Cash Flows</div>
<div class="t" style="left:151.55px;top:187.30px;width:60px;text-align:center;font-size:8.5px;color:#000;font-weight:normal;line-height:12px">-</div>
<div class="t" style="left:206.10px;top:187.30px;width:60px;text-align:center;font-size:8.5px;color:#000;font-weight:normal;line-height:12px">-</div>
<div class="t" style="left:258.60px;top:187.30px;width:60px;text-align:center;font-size:8.5px;color:#000;font-weight:normal;line-height:12px">-</div>
<div class="t" style="left:312.18px;top:187.30px;width:60px;text-align:center;font-size:8.5px;color:#000;font-weight:normal;line-height:12px">-</div>
<div class="t" style="left:365.73px;top:187.30px;width:60px;text-align:center;font-size:8.5px;color:#000;font-weight:normal;line-height:12px">-</div>
<div class="t" style="left:439.10px;top:187.30px;width:60px;text-align:center;font-size:8.5px;color:#000;font-weight:normal;line-height:12px">-45,000</div>
<div class="t" style="left:491.85px;top:187.30px;width:60px;text-align:center;font-size:8.5px;color:#000;font-weight:normal;line-height:12px">-</div>
<div class="t" style="left:538.80px;top:187.30px;width:60px;text-align:center;font-size:8.5px;color:#000;font-weight:normal;line-height:12px">-</div>
<div class="t" style="left:585.75px;top:187.30px;width:60px;text-align:center;font-size:8.5px;color:#000;font-weight:normal;line-height:12px">-</div>
<div class="t" style="left:632.45px;top:187.30px;width:60px;text-align:center;font-size:8.5px;color:#000;font-weight:normal;line-height:12px">-</div>
<div class="t" style="left:678.60px;top:187.30px;width:60px;text-align:center;font-size:8.5px;color:#000;font-weight:normal;line-height:12px">-</div>
<div class="t" style="left:724.60px;top:187.30px;width:60px;text-align:center;font-size:8.5px;color:#000;font-weight:normal;line-height:12px">-</div>
<div class="t" style="left:771.20px;top:187.30px;width:60px;text-align:center;font-size:8.5px;color:#000;font-weight:normal;line-height:12px">-</div>
<div class="t" style="left:816.90px;top:187.30px;width:60px;text-align:center;font-size:8.5px;color:#000;font-weight:normal;line-height:12px">-</div>
<div class="t" style="left:861.25px;top:187.30px;width:60px;text-align:center;font-size:8.5px;color:#000;font-weight:normal;line-height:12px">-</div>
<div class="t" style="left:906.00px;top:187.30px;width:60px;text-align:center;font-size:8.5px;color:#000;font-weight:normal;line-height:12px">-</div>
<div class="t" style="left:951.25px;top:187.30px;width:60px;text-align:center;font-size:8.5px;color:#000;font-weight:normal;line-height:12px">-</div>
<div class="t" style="left:31.00px;top:199.57px;font-size:8.5px;color:#000;font-weight:normal;line-height:12px">Debt Drawdowns/(Repayments</div>
<div class="t" style="left:151.55px;top:199.57px;width:60px;text-align:center;font-size:8.5px;color:#000;font-weight:normal;line-height:12px">-1,818</div>
<div class="t" style="left:206.10px;top:199.57px;width:60px;text-align:center;font-size:8.5px;color:#000;font-weight:normal;line-height:12px">-1,818</div>
<div class="t" style="left:258.60px;top:199.57px;width:60px;text-align:center;font-size:8.5px;color:#000;font-weight:normal;line-height:12px">0</div>
<div class="t" style="left:312.18px;top:199.57px;width:60px;text-align:center;font-size:8.5px;color:#000;font-weight:normal;line-height:12px">0</div>
<div class="t" style="left:365.73px;top:199.57px;width:60px;text-align:center;font-size:8.5px;color:#000;font-weight:normal;line-height:12px">0</div>
<div class="t" style="left:439.10px;top:199.57px;width:60px;text-align:center;font-size:8.5px;color:#000;font-weight:normal;line-height:12px">-</div>
<div class="t" style="left:491.85px;top:199.57px;width:60px;text-align:center;font-size:8.5px;color:#000;font-weight:normal;line-height:12px">-1,818</div>
<div class="t" style="left:538.80px;top:199.57px;width:60px;text-align:center;font-size:8.5px;color:#000;font-weight:normal;line-height:12px">-1,818</div>
<div class="t" style="left:585.75px;top:199.57px;width:60px;text-align:center;font-size:8.5px;color:#000;font-weight:normal;line-height:12px">-1,818</div>
<div class="t" style="left:632.45px;top:199.57px;width:60px;text-align:center;font-size:8.5px;color:#000;font-weight:normal;line-height:12px">-1,818</div>
<div class="t" style="left:678.60px;top:199.57px;width:60px;text-align:center;font-size:8.5px;color:#000;font-weight:normal;line-height:12px">-1,818</div>
<div class="t" style="left:724.60px;top:199.57px;width:60px;text-align:center;font-size:8.5px;color:#000;font-weight:normal;line-height:12px">-1,818</div>
<div class="t" style="left:771.20px;top:199.57px;width:60px;text-align:center;font-size:8.5px;color:#000;font-weight:normal;line-height:12px">-1,818</div>
<div class="t" style="left:816.90px;top:199.57px;width:60px;text-align:center;font-size:8.5px;color:#000;font-weight:normal;line-height:12px">-1,818</div>
<div class="t" style="left:861.25px;top:199.57px;width:60px;text-align:center;font-size:8.5px;color:#000;font-weight:normal;line-height:12px">-1,818</div>
<div class="t" style="left:906.00px;top:199.57px;width:60px;text-align:center;font-size:8.5px;color:#000;font-weight:normal;line-height:12px">-1,818</div>
<div class="t" style="left:951.25px;top:199.57px;width:60px;text-align:center;font-size:8.5px;color:#000;font-weight:normal;line-height:12px">-1,818</div>
<div class="t" style="left:31.00px;top:211.84px;font-size:8.5px;color:#000;font-weight:normal;line-height:12px">Equity Raisings/(Buybacks)</div>
<div class="t" style="left:151.55px;top:211.84px;width:60px;text-align:center;font-size:8.5px;color:#000;font-weight:normal;line-height:12px">-</div>
<div class="t" style="left:206.10px;top:211.84px;width:60px;text-align:center;font-size:8.5px;color:#000;font-weight:normal;line-height:12px">-</div>
<div class="t" style="left:258.60px;top:211.84px;width:60px;text-align:center;font-size:8.5px;color:#000;font-weight:normal;line-height:12px">-</div>
<div class="t" style="left:312.18px;top:211.84px;width:60px;text-align:center;font-size:8.5px;color:#000;font-weight:normal;line-height:12px">-</div>
<div class="t" style="left:365.73px;top:211.84px;width:60px;text-align:center;font-size:8.5px;color:#000;font-weight:normal;line-height:12px">-</div>
<div class="t" style="left:439.10px;top:211.84px;width:60px;text-align:center;font-size:8.5px;color:#000;font-weight:normal;line-height:12px">-</div>
<div class="t" style="left:491.85px;top:211.84px;width:60px;text-align:center;font-size:8.5px;color:#000;font-weight:normal;line-height:12px">-</div>
<div class="t" style="left:538.80px;top:211.84px;width:60px;text-align:center;font-size:8.5px;color:#000;font-weight:normal;line-height:12px">-</div>
<div class="t" style="left:585.75px;top:211.84px;width:60px;text-align:center;font-size:8.5px;color:#000;font-weight:normal;line-height:12px">-</div>
<div class="t" style="left:632.45px;top:211.84px;width:60px;text-align:center;font-size:8.5px;color:#000;font-weight:normal;line-height:12px">-</div>
<div class="t" style="left:678.60px;top:211.84px;width:60px;text-align:center;font-size:8.5px;color:#000;font-weight:normal;line-height:12px">-</div>
<div class="t" style="left:724.60px;top:211.84px;width:60px;text-align:center;font-size:8.5px;color:#000;font-weight:normal;line-height:12px">-</div>
<div class="t" style="left:771.20px;top:211.84px;width:60px;text-align:center;font-size:8.5px;color:#000;font-weight:normal;line-height:12px">-</div>
<div class="t" style="left:816.90px;top:211.84px;width:60px;text-align:center;font-size:8.5px;color:#000;font-weight:normal;line-height:12px">-</div>
<div class="t" style="left:861.25px;top:211.84px;width:60px;text-align:center;font-size:8.5px;color:#000;font-weight:normal;line-height:12px">-</div>
<div class="t" style="left:906.00px;top:211.84px;width:60px;text-align:center;font-size:8.5px;color:#000;font-weight:normal;line-height:12px">-</div>
<div class="t" style="left:951.25px;top:211.84px;width:60px;text-align:center;font-size:8.5px;color:#000;font-weight:normal;line-height:12px">-</div>
<div class="t" style="left:31.00px;top:224.11px;font-size:8.5px;color:#000;font-weight:normal;line-height:12px">Other Financing Cash Flows</div>
<div class="t" style="left:151.55px;top:224.11px;width:60px;text-align:center;font-size:8.5px;color:#000;font-weight:normal;line-height:12px">-</div>
<div class="t" style="left:206.10px;top:224.11px;width:60px;text-align:center;font-size:8.5px;color:#000;font-weight:normal;line-height:12px">-</div>
<div class="t" style="left:258.60px;top:224.11px;width:60px;text-align:center;font-size:8.5px;color:#000;font-weight:normal;line-height:12px">-</div>
<div class="t" style="left:312.18px;top:224.11px;width:60px;text-align:center;font-size:8.5px;color:#000;font-weight:normal;line-height:12px">-</div>
<div class="t" style="left:365.73px;top:224.11px;width:60px;text-align:center;font-size:8.5px;color:#000;font-weight:normal;line-height:12px">-</div>
<div class="t" style="left:439.10px;top:224.11px;width:60px;text-align:center;font-size:8.5px;color:#000;font-weight:normal;line-height:12px">-</div>
<div class="t" style="left:491.85px;top:224.11px;width:60px;text-align:center;font-size:8.5px;color:#000;font-weight:normal;line-height:12px">-</div>
<div class="t" style="left:538.80px;top:224.11px;width:60px;text-align:center;font-size:8.5px;color:#000;font-weight:normal;line-height:12px">-</div>
<div class="t" style="left:585.75px;top:224.11px;width:60px;text-align:center;font-size:8.5px;color:#000;font-weight:normal;line-height:12px">-</div>
<div class="t" style="left:632.45px;top:224.11px;width:60px;text-align:center;font-size:8.5px;color:#000;font-weight:normal;line-height:12px">-</div>
<div class="t" style="left:678.60px;top:224.11px;width:60px;text-align:center;font-size:8.5px;color:#000;font-weight:normal;line-height:12px">-</div>
<div class="t" style="left:724.60px;top:224.11px;width:60px;text-align:center;font-size:8.5px;color:#000;font-weight:normal;line-height:12px">-</div>
<div class="t" style="left:771.20px;top:224.11px;width:60px;text-align:center;font-size:8.5px;color:#000;font-weight:normal;line-height:12px">-</div>
<div class="t" style="left:816.90px;top:224.11px;width:60px;text-align:center;font-size:8.5px;color:#000;font-weight:normal;line-height:12px">-</div>
<div class="t" style="left:861.25px;top:224.11px;width:60px;text-align:center;font-size:8.5px;color:#000;font-weight:normal;line-height:12px">-</div>
<div class="t" style="left:906.00px;top:224.11px;width:60px;text-align:center;font-size:8.5px;color:#000;font-weight:normal;line-height:12px">-</div>
<div class="t" style="left:951.25px;top:224.11px;width:60px;text-align:center;font-size:8.5px;color:#000;font-weight:normal;line-height:12px">-</div>
<div class="t" style="left:31.00px;top:236.38px;font-size:8.5px;color:#000;font-weight:normal;line-height:12px">Financing Cash Flows</div>
<div class="t" style="left:151.55px;top:236.38px;width:60px;text-align:center;font-size:8.5px;color:#000;font-weight:normal;line-height:12px">-1,818</div>
<div class="t" style="left:206.10px;top:236.38px;width:60px;text-align:center;font-size:8.5px;color:#000;font-weight:normal;line-height:12px">-1,818</div>
<div class="t" style="left:258.60px;top:236.38px;width:60px;text-align:center;font-size:8.5px;color:#000;font-weight:normal;line-height:12px">0</div>
<div class="t" style="left:312.18px;top:236.38px;width:60px;text-align:center;font-size:8.5px;color:#000;font-weight:normal;line-height:12px">0</div>
<div class="t" style="left:365.73px;top:236.38px;width:60px;text-align:center;font-size:8.5px;color:#000;font-weight:normal;line-height:12px">0</div>
<div class="t" style="left:439.10px;top:236.38px;width:60px;text-align:center;font-size:8.5px;color:#000;font-weight:normal;line-height:12px">-</div>
<div class="t" style="left:491.85px;top:236.38px;width:60px;text-align:center;font-size:8.5px;color:#000;font-weight:normal;line-height:12px">-1,818</div>
<div class="t" style="left:538.80px;top:236.38px;width:60px;text-align:center;font-size:8.5px;color:#000;font-weight:normal;line-height:12px">-1,818</div>
<div class="t" style="left:585.75px;top:236.38px;width:60px;text-align:center;font-size:8.5px;color:#000;font-weight:normal;line-height:12px">-1,818</div>
<div class="t" style="left:632.45px;top:236.38px;width:60px;text-align:center;font-size:8.5px;color:#000;font-weight:normal;line-height:12px">-1,818</div>
<div class="t" style="left:678.60px;top:236.38px;width:60px;text-align:center;font-size:8.5px;color:#000;font-weight:normal;line-height:12px">-1,818</div>
<div class="t" style="left:724.60px;top:236.38px;width:60px;text-align:center;font-size:8.5px;color:#000;font-weight:normal;line-height:12px">-1,818</div>
<div class="t" style="left:771.20px;top:236.38px;width:60px;text-align:center;font-size:8.5px;color:#000;font-weight:normal;line-height:12px">-1,818</div>
<div class="t" style="left:816.90px;top:236.38px;width:60px;text-align:center;font-size:8.5px;color:#000;font-weight:normal;line-height:12px">-1,818</div>
<div class="t" style="left:861.25px;top:236.38px;width:60px;text-align:center;font-size:8.5px;color:#000;font-weight:normal;line-height:12px">-1,818</div>
<div class="t" style="left:906.00px;top:236.38px;width:60px;text-align:center;font-size:8.5px;color:#000;font-weight:normal;line-height:12px">-1,818</div>
<div class="t" style="left:951.25px;top:236.38px;width:60px;text-align:center;font-size:8.5px;color:#000;font-weight:normal;line-height:12px">-1,818</div>
<div class="t" style="left:31.00px;top:248.65px;font-size:8.5px;color:#000;font-weight:normal;line-height:12px">Change In Cash Held</div>
<div class="t" style="left:151.55px;top:248.65px;width:60px;text-align:center;font-size:8.5px;color:#000;font-weight:normal;line-height:12px">358,157</div>
<div class="t" style="left:206.10px;top:248.65px;width:60px;text-align:center;font-size:8.5px;color:#000;font-weight:normal;line-height:12px">471,812</div>
<div class="t" style="left:258.60px;top:248.65px;width:60px;text-align:center;font-size:8.5px;color:#000;font-weight:normal;line-height:12px">533,851</div>
<div class="t" style="left:312.18px;top:248.65px;width:60px;text-align:center;font-size:8.5px;color:#000;font-weight:normal;line-height:12px">803,605</div>
<div class="t" style="left:365.73px;top:248.65px;width:60px;text-align:center;font-size:8.5px;color:#000;font-weight:normal;line-height:12px">903,056</div>
<div class="t" style="left:439.10px;top:248.65px;width:60px;text-align:center;font-size:8.5px;color:#000;font-weight:normal;line-height:12px">-45,000</div>
<div class="t" style="left:491.85px;top:248.65px;width:60px;text-align:center;font-size:8.5px;color:#000;font-weight:normal;line-height:12px">338,961</div>
<div class="t" style="left:538.80px;top:248.65px;width:60px;text-align:center;font-size:8.5px;color:#000;font-weight:normal;line-height:12px">284,444</div>
<div class="t" style="left:585.75px;top:248.65px;width:60px;text-align:center;font-size:8.5px;color:#000;font-weight:normal;line-height:12px">356,168</div>
<div class="t" style="left:632.45px;top:248.65px;width:60px;text-align:center;font-size:8.5px;color:#000;font-weight:normal;line-height:12px">289,119</div>
<div class="t" style="left:678.60px;top:248.65px;width:60px;text-align:center;font-size:8.5px;color:#000;font-weight:normal;line-height:12px">309,719</div>
<div class="t" style="left:724.60px;top:248.65px;width:60px;text-align:center;font-size:8.5px;color:#000;font-weight:normal;line-height:12px">293,231</div>
<div class="t" style="left:771.20px;top:248.65px;width:60px;text-align:center;font-size:8.5px;color:#000;font-weight:normal;line-height:12px">309,186</div>
<div class="t" style="left:816.90px;top:248.65px;width:60px;text-align:center;font-size:8.5px;color:#000;font-weight:normal;line-height:12px">314,914</div>
<div class="t" style="left:861.25px;top:248.65px;width:60px;text-align:center;font-size:8.5px;color:#000;font-weight:normal;line-height:12px">350,697</div>
<div class="t" style="left:906.00px;top:248.65px;width:60px;text-align:center;font-size:8.5px;color:#000;font-weight:normal;line-height:12px">356,657</div>
<div class="t" style="left:951.25px;top:248.65px;width:60px;text-align:center;font-size:8.5px;color:#000;font-weight:normal;line-height:12px">358,157</div>
<div class="t" style="left:31.00px;top:260.92px;font-size:8.5px;color:#000;font-weight:normal;line-height:12px">Closing Cash</div>
<div class="t" style="left:151.55px;top:260.92px;width:60px;text-align:center;font-size:8.5px;color:#000;font-weight:normal;line-height:12px">714,495</div>
<div class="t" style="left:206.10px;top:260.92px;width:60px;text-align:center;font-size:8.5px;color:#000;font-weight:normal;line-height:12px">941,807</div>
<div class="t" style="left:258.60px;top:260.92px;width:60px;text-align:center;font-size:8.5px;color:#000;font-weight:normal;line-height:12px">1,067,703</div>
<div class="t" style="left:312.18px;top:260.92px;width:60px;text-align:center;font-size:8.5px;color:#000;font-weight:normal;line-height:12px">1,607,209</div>
<div class="t" style="left:365.73px;top:260.92px;width:60px;text-align:center;font-size:8.5px;color:#000;font-weight:normal;line-height:12px">1,806,111</div>
<div class="t" style="left:439.10px;top:260.92px;width:60px;text-align:center;font-size:8.5px;color:#000;font-weight:normal;line-height:12px">426,322</div>
<div class="t" style="left:491.85px;top:260.92px;width:60px;text-align:center;font-size:8.5px;color:#000;font-weight:normal;line-height:12px">676,105</div>
<div class="t" style="left:538.80px;top:260.92px;width:60px;text-align:center;font-size:8.5px;color:#000;font-weight:normal;line-height:12px">567,070</div>
<div class="t" style="left:585.75px;top:260.92px;width:60px;text-align:center;font-size:8.5px;color:#000;font-weight:normal;line-height:12px">710,518</div>
<div class="t" style="left:632.45px;top:260.92px;width:60px;text-align:center;font-size:8.5px;color:#000;font-weight:normal;line-height:12px">576,421</div>
<div class="t" style="left:678.60px;top:260.92px;width:60px;text-align:center;font-size:8.5px;color:#000;font-weight:normal;line-height:12px">617,620</div>
<div class="t" style="left:724.60px;top:260.92px;width:60px;text-align:center;font-size:8.5px;color:#000;font-weight:normal;line-height:12px">584,643</div>
<div class="t" style="left:771.20px;top:260.92px;width:60px;text-align:center;font-size:8.5px;color:#000;font-weight:normal;line-height:12px">616,554</div>
<div class="t" style="left:816.90px;top:260.92px;width:60px;text-align:center;font-size:8.5px;color:#000;font-weight:normal;line-height:12px">628,010</div>
<div class="t" style="left:861.25px;top:260.92px;width:60px;text-align:center;font-size:8.5px;color:#000;font-weight:normal;line-height:12px">699,577</div>
<div class="t" style="left:906.00px;top:260.92px;width:60px;text-align:center;font-size:8.5px;color:#000;font-weight:normal;line-height:12px">711,496</div>
<div class="t" style="left:951.25px;top:260.92px;width:60px;text-align:center;font-size:8.5px;color:#000;font-weight:normal;line-height:12px">714,495</div>
<div style="position:absolute;left:29.40px;top:285.41px;width:393.30px;height:12.27px;background:#2f5597"></div>
<div class="t" style="left:30.90px;top:285.81px;font-size:9.2px;color:#fff;font-weight:bold;transform:scaleX(0.915);transform-origin:0 0;line-height:12px">Cash Flow Statement 5 Years to December 2029</div>
<div style="position:absolute;left:439.80px;top:285.41px;width:564.10px;height:12.27px;background:#2f5597"></div>
<div class="t" style="left:571.85px;top:285.81px;width:300px;text-align:center;font-size:9.2px;color:#fff;font-weight:bold;transform:scaleX(0.915);transform-origin:50% 0;line-height:12px">Cash Flow Statement Summery 2025</div>
<div style="position:absolute;left:29.40px;top:555.35px;width:974.50px;height:12.27px;background:#2f5597"></div>
<div class="t" style="left:30.90px;top:555.75px;font-size:9.2px;color:#fff;font-weight:bold;transform:scaleX(0.915);transform-origin:0 0;line-height:12px">Income Statement 5 Years to December 2029</div>
<div class="t" style="left:571.85px;top:555.75px;width:300px;text-align:center;font-size:9.2px;color:#fff;font-weight:bold;transform:scaleX(0.915);transform-origin:50% 0;line-height:12px">Income Statement Summery 2025</div>
<div style="position:absolute;left:28.60px;top:304.00px;width:396.40px;height:229.40px;box-sizing:border-box;border:1px solid #e3e3e3;background:#fff"></div>
<svg style="position:absolute;left:0;top:0;overflow:visible" width="1024" height="605" font-family='"Liberation Sans", sans-serif'><line x1="133.5" y1="456.07" x2="414.6" y2="456.07" stroke="#e1e1e1" stroke-width="1"/><text x="126.7" y="458.97" text-anchor="end" font-size="6.9" fill="#595959">-200,000</text><line x1="133.5" y1="443.10" x2="414.6" y2="443.10" stroke="#e1e1e1" stroke-width="1"/><text x="126.7" y="446.00" text-anchor="end" font-size="6.9" fill="#595959">0</text><line x1="133.5" y1="430.13" x2="414.6" y2="430.13" stroke="#e1e1e1" stroke-width="1"/><text x="126.7" y="433.03" text-anchor="end" font-size="6.9" fill="#595959">200,000</text><line x1="133.5" y1="417.16" x2="414.6" y2="417.16" stroke="#e1e1e1" stroke-width="1"/><text x="126.7" y="420.06" text-anchor="end" font-size="6.9" fill="#595959">400,000</text><line x1="133.5" y1="404.19" x2="414.6" y2="404.19" stroke="#e1e1e1" stroke-width="1"/><text x="126.7" y="407.09" text-anchor="end" font-size="6.9" fill="#595959">600,000</text><line x1="133.5" y1="391.22" x2="414.6" y2="391.22" stroke="#e1e1e1" stroke-width="1"/><text x="126.7" y="394.12" text-anchor="end" font-size="6.9" fill="#595959">800,000</text><line x1="133.5" y1="378.25" x2="414.6" y2="378.25" stroke="#e1e1e1" stroke-width="1"/><text x="126.7" y="381.15" text-anchor="end" font-size="6.9" fill="#595959">1,000,000</text><line x1="133.5" y1="365.28" x2="414.6" y2="365.28" stroke="#e1e1e1" stroke-width="1"/><text x="126.7" y="368.18" text-anchor="end" font-size="6.9" fill="#595959">1,200,000</text><line x1="133.5" y1="352.31" x2="414.6" y2="352.31" stroke="#e1e1e1" stroke-width="1"/><text x="126.7" y="355.21" text-anchor="end" font-size="6.9" fill="#595959">1,400,000</text><line x1="133.5" y1="339.34" x2="414.6" y2="339.34" stroke="#e1e1e1" stroke-width="1"/><text x="126.7" y="342.24" text-anchor="end" font-size="6.9" fill="#595959">1,600,000</text><line x1="133.5" y1="326.37" x2="414.6" y2="326.37" stroke="#e1e1e1" stroke-width="1"/><text x="126.7" y="329.27" text-anchor="end" font-size="6.9" fill="#595959">1,800,000</text><line x1="133.5" y1="313.40" x2="414.6" y2="313.40" stroke="#e1e1e1" stroke-width="1"/><text x="126.7" y="316.30" text-anchor="end" font-size="6.9" fill="#595959">2,000,000</text><rect x="144.51" y="419.87" width="9.60" height="23.23" fill="#4472c4"/><rect x="200.73" y="412.50" width="9.60" height="30.60" fill="#4472c4"/><rect x="256.95" y="408.48" width="9.60" height="34.62" fill="#4472c4"/><rect x="313.17" y="390.99" width="9.60" height="52.11" fill="#4472c4"/><rect x="369.39" y="384.54" width="9.60" height="58.56" fill="#4472c4"/><polyline points="161.61,419.87 217.83,412.50 274.05,408.48 330.27,390.99 386.49,384.54" fill="none" stroke="#ffc000" stroke-width="2" stroke-linejoin="round" stroke-linecap="round"/><polyline points="161.61,396.76 217.83,382.02 274.05,373.86 330.27,338.87 386.49,325.97" fill="none" stroke="#5b9bd5" stroke-width="2" stroke-linejoin="round" stroke-linecap="round"/><line x1="133.5" y1="455.90" x2="414.6" y2="455.90" stroke="#e0e0e0" stroke-width="1"/><line x1="43.4" y1="467.40" x2="414.6" y2="467.40" stroke="#e0e0e0" stroke-width="1"/><line x1="43.4" y1="479.70" x2="414.6" y2="479.70" stroke="#e0e0e0" stroke-width="1"/><line x1="43.4" y1="492.00" x2="414.6" y2="492.00" stroke="#e0e0e0" stroke-width="1"/><line x1="43.4" y1="504.30" x2="414.6" y2="504.30" stroke="#e0e0e0" stroke-width="1"/><line x1="43.4" y1="516.60" x2="414.6" y2="516.60" stroke="#e0e0e0" stroke-width="1"/><line x1="43.4" y1="528.90" x2="414.6" y2="528.90" stroke="#e0e0e0" stroke-width="1"/><line x1="133.50" y1="455.90" x2="133.50" y2="528.90" stroke="#e0e0e0" stroke-width="1"/><line x1="189.72" y1="455.90" x2="189.72" y2="528.90" stroke="#e0e0e0" stroke-width="1"/><line x1="245.94" y1="455.90" x2="245.94" y2="528.90" stroke="#e0e0e0" stroke-width="1"/><line x1="302.16" y1="455.90" x2="302.16" y2="528.90" stroke="#e0e0e0" stroke-width="1"/><line x1="358.38" y1="455.90" x2="358.38" y2="528.90" stroke="#e0e0e0" stroke-width="1"/><line x1="414.60" y1="455.90" x2="414.60" y2="528.90" stroke="#e0e0e0" stroke-width="1"/><line x1="43.4" y1="467.40" x2="43.4" y2="528.90" stroke="#e0e0e0" stroke-width="1"/><text x="161.61" y="464.05" text-anchor="middle" font-size="6.8" fill="#595959">2025</text><text x="217.83" y="464.05" text-anchor="middle" font-size="6.8" fill="#595959">2026</text><text x="274.05" y="464.05" text-anchor="middle" font-size="6.8" fill="#595959">2027</text><text x="330.27" y="464.05" text-anchor="middle" font-size="6.8" fill="#595959">2028</text><text x="386.49" y="464.05" text-anchor="middle" font-size="6.8" fill="#595959">2029</text><rect x="46.20" y="471.45" width="16.60" height="4.2" fill="#4472c4"/><text x="64.00" y="475.95" font-size="6.8" fill="#595959">Operating Cash Flows</text><text x="161.61" y="475.95" text-anchor="middle" font-size="6.8" fill="#595959">358,157</text><text x="217.83" y="475.95" text-anchor="middle" font-size="6.8" fill="#595959">471,812</text><text x="274.05" y="475.95" text-anchor="middle" font-size="6.8" fill="#595959">533,851</text><text x="330.27" y="475.95" text-anchor="middle" font-size="6.8" fill="#595959">803,605</text><text x="386.49" y="475.95" text-anchor="middle" font-size="6.8" fill="#595959">903,056</text><rect x="46.20" y="483.75" width="16.60" height="4.2" fill="#ed7d31"/><text x="64.00" y="488.25" font-size="6.8" fill="#595959">Investing Cash Flows</text><text x="161.61" y="488.25" text-anchor="middle" font-size="6.8" fill="#595959">0</text><text x="217.83" y="488.25" text-anchor="middle" font-size="6.8" fill="#595959">0</text><text x="274.05" y="488.25" text-anchor="middle" font-size="6.8" fill="#595959">0</text><text x="330.27" y="488.25" text-anchor="middle" font-size="6.8" fill="#595959">0</text><text x="386.49" y="488.25" text-anchor="middle" font-size="6.8" fill="#595959">0</text><rect x="46.20" y="496.05" width="16.60" height="4.2" fill="#a5a5a5"/><text x="64.00" y="500.55" font-size="6.8" fill="#595959">Financing Cash Flows</text><text x="161.61" y="500.55" text-anchor="middle" font-size="6.8" fill="#595959">-1,818</text><text x="217.83" y="500.55" text-anchor="middle" font-size="6.8" fill="#595959">-1,818</text><text x="274.05" y="500.55" text-anchor="middle" font-size="6.8" fill="#595959">0</text><text x="330.27" y="500.55" text-anchor="middle" font-size="6.8" fill="#595959">0</text><text x="386.49" y="500.55" text-anchor="middle" font-size="6.8" fill="#595959">0</text><line x1="45.00" y1="510.45" x2="63.50" y2="510.45" stroke="#ffc000" stroke-width="2.1"/><text x="64.00" y="512.85" font-size="6.8" fill="#595959">Change In Cash Held</text><text x="161.61" y="512.85" text-anchor="middle" font-size="6.8" fill="#595959">358,157</text><text x="217.83" y="512.85" text-anchor="middle" font-size="6.8" fill="#595959">471,812</text><text x="274.05" y="512.85" text-anchor="middle" font-size="6.8" fill="#595959">533,851</text><text x="330.27" y="512.85" text-anchor="middle" font-size="6.8" fill="#595959">803,605</text><text x="386.49" y="512.85" text-anchor="middle" font-size="6.8" fill="#595959">903,056</text><line x1="45.00" y1="522.75" x2="63.50" y2="522.75" stroke="#5b9bd5" stroke-width="2.1"/><text x="64.00" y="525.15" font-size="6.8" fill="#595959">Closing Cash</text><text x="161.61" y="525.15" text-anchor="middle" font-size="6.8" fill="#595959">714,495</text><text x="217.83" y="525.15" text-anchor="middle" font-size="6.8" fill="#595959">941,807</text><text x="274.05" y="525.15" text-anchor="middle" font-size="6.8" fill="#595959">1,067,703</text><text x="330.27" y="525.15" text-anchor="middle" font-size="6.8" fill="#595959">1,607,209</text><text x="386.49" y="525.15" text-anchor="middle" font-size="6.8" fill="#595959">1,806,111</text></svg>
<div style="position:absolute;left:439.40px;top:302.40px;width:568.50px;height:229.40px;box-sizing:border-box;border:1px solid #e3e3e3;background:#fff"></div>
<svg style="position:absolute;left:0;top:0;overflow:visible" width="1024" height="605" font-family='"Liberation Sans", sans-serif'><line x1="544.5" y1="454.18" x2="997.2" y2="454.18" stroke="#e1e1e1" stroke-width="1"/><text x="537.1" y="457.07" text-anchor="end" font-size="6.9" fill="#595959">-100,000</text><line x1="544.5" y1="438.30" x2="997.2" y2="438.30" stroke="#e1e1e1" stroke-width="1"/><text x="537.1" y="441.20" text-anchor="end" font-size="6.9" fill="#595959">0</text><line x1="544.5" y1="422.43" x2="997.2" y2="422.43" stroke="#e1e1e1" stroke-width="1"/><text x="537.1" y="425.32" text-anchor="end" font-size="6.9" fill="#595959">100,000</text><line x1="544.5" y1="406.55" x2="997.2" y2="406.55" stroke="#e1e1e1" stroke-width="1"/><text x="537.1" y="409.45" text-anchor="end" font-size="6.9" fill="#595959">200,000</text><line x1="544.5" y1="390.68" x2="997.2" y2="390.68" stroke="#e1e1e1" stroke-width="1"/><text x="537.1" y="393.57" text-anchor="end" font-size="6.9" fill="#595959">300,000</text><line x1="544.5" y1="374.80" x2="997.2" y2="374.80" stroke="#e1e1e1" stroke-width="1"/><text x="537.1" y="377.70" text-anchor="end" font-size="6.9" fill="#595959">400,000</text><line x1="544.5" y1="358.93" x2="997.2" y2="358.93" stroke="#e1e1e1" stroke-width="1"/><text x="537.1" y="361.82" text-anchor="end" font-size="6.9" fill="#595959">500,000</text><line x1="544.5" y1="343.05" x2="997.2" y2="343.05" stroke="#e1e1e1" stroke-width="1"/><text x="537.1" y="345.95" text-anchor="end" font-size="6.9" fill="#595959">600,000</text><line x1="544.5" y1="327.18" x2="997.2" y2="327.18" stroke="#e1e1e1" stroke-width="1"/><text x="537.1" y="330.07" text-anchor="end" font-size="6.9" fill="#595959">700,000</text><line x1="544.5" y1="311.30" x2="997.2" y2="311.30" stroke="#e1e1e1" stroke-width="1"/><text x="537.1" y="314.20" text-anchor="end" font-size="6.9" fill="#595959">800,000</text><rect x="551.76" y="397.32" width="6.40" height="40.98" fill="#4472c4"/><rect x="560.16" y="438.30" width="6.40" height="7.14" fill="#ed7d31"/><rect x="589.49" y="384.49" width="6.40" height="53.81" fill="#4472c4"/><rect x="627.21" y="393.14" width="6.40" height="45.16" fill="#4472c4"/><rect x="664.94" y="381.76" width="6.40" height="56.54" fill="#4472c4"/><rect x="702.66" y="392.40" width="6.40" height="45.90" fill="#4472c4"/><rect x="740.39" y="389.13" width="6.40" height="49.17" fill="#4472c4"/><rect x="778.11" y="391.75" width="6.40" height="46.55" fill="#4472c4"/><rect x="815.84" y="389.22" width="6.40" height="49.08" fill="#4472c4"/><rect x="853.56" y="388.31" width="6.40" height="49.99" fill="#4472c4"/><rect x="891.29" y="382.63" width="6.40" height="55.67" fill="#4472c4"/><rect x="929.01" y="381.68" width="6.40" height="56.62" fill="#4472c4"/><rect x="966.74" y="381.44" width="6.40" height="56.86" fill="#4472c4"/><polyline points="563.36,445.44 601.09,384.49 638.81,393.14 676.54,381.76 714.26,392.40 751.99,389.13 789.71,391.75 827.44,389.22 865.16,388.31 902.89,382.63 940.61,381.68 978.34,381.44" fill="none" stroke="#ffd966" stroke-width="2" stroke-linejoin="round" stroke-linecap="round"/><polyline points="563.36,370.62 601.09,330.97 638.81,348.28 676.54,325.51 714.26,346.79 751.99,340.25 789.71,345.49 827.44,340.42 865.16,338.60 902.89,327.24 940.61,325.35 978.34,324.87" fill="none" stroke="#2e75b6" stroke-width="2" stroke-linejoin="round" stroke-linecap="round"/><line x1="544.5" y1="454.30" x2="997.2" y2="454.30" stroke="#e0e0e0" stroke-width="1"/><line x1="453.6" y1="466.20" x2="997.2" y2="466.20" stroke="#e0e0e0" stroke-width="1"/><line x1="453.6" y1="478.40" x2="997.2" y2="478.40" stroke="#e0e0e0" stroke-width="1"/><line x1="453.6" y1="490.60" x2="997.2" y2="490.60" stroke="#e0e0e0" stroke-width="1"/><line x1="453.6" y1="502.80" x2="997.2" y2="502.80" stroke="#e0e0e0" stroke-width="1"/><line x1="453.6" y1="515.00" x2="997.2" y2="515.00" stroke="#e0e0e0" stroke-width="1"/><line x1="453.6" y1="527.10" x2="997.2" y2="527.10" stroke="#e0e0e0" stroke-width="1"/><line x1="544.50" y1="454.30" x2="544.50" y2="527.10" stroke="#e0e0e0" stroke-width="1"/><line x1="582.23" y1="454.30" x2="582.23" y2="527.10" stroke="#e0e0e0" stroke-width="1"/><line x1="619.95" y1="454.30" x2="619.95" y2="527.10" stroke="#e0e0e0" stroke-width="1"/><line x1="657.67" y1="454.30" x2="657.67" y2="527.10" stroke="#e0e0e0" stroke-width="1"/><line x1="695.40" y1="454.30" x2="695.40" y2="527.10" stroke="#e0e0e0" stroke-width="1"/><line x1="733.12" y1="454.30" x2="733.12" y2="527.10" stroke="#e0e0e0" stroke-width="1"/><line x1="770.85" y1="454.30" x2="770.85" y2="527.10" stroke="#e0e0e0" stroke-width="1"/><line x1="808.58" y1="454.30" x2="808.58" y2="527.10" stroke="#e0e0e0" stroke-width="1"/><line x1="846.30" y1="454.30" x2="846.30" y2="527.10" stroke="#e0e0e0" stroke-width="1"/><line x1="884.03" y1="454.30" x2="884.03" y2="527.10" stroke="#e0e0e0" stroke-width="1"/><line x1="921.75" y1="454.30" x2="921.75" y2="527.10" stroke="#e0e0e0" stroke-width="1"/><line x1="959.48" y1="454.30" x2="959.48" y2="527.10" stroke="#e0e0e0" stroke-width="1"/><line x1="997.20" y1="454.30" x2="997.20" y2="527.10" stroke="#e0e0e0" stroke-width="1"/><line x1="453.6" y1="466.20" x2="453.6" y2="527.10" stroke="#e0e0e0" stroke-width="1"/><text x="563.36" y="462.65" text-anchor="middle" font-size="6.8" fill="#595959">Jan</text><text x="601.09" y="462.65" text-anchor="middle" font-size="6.8" fill="#595959">Feb</text><text x="638.81" y="462.65" text-anchor="middle" font-size="6.8" fill="#595959">Mar</text><text x="676.54" y="462.65" text-anchor="middle" font-size="6.8" fill="#595959">Apr</text><text x="714.26" y="462.65" text-anchor="middle" font-size="6.8" fill="#595959">May</text><text x="751.99" y="462.65" text-anchor="middle" font-size="6.8" fill="#595959">Jun</text><text x="789.71" y="462.65" text-anchor="middle" font-size="6.8" fill="#595959">Jul</text><text x="827.44" y="462.65" text-anchor="middle" font-size="6.8" fill="#595959">Aug</text><text x="865.16" y="462.65" text-anchor="middle" font-size="6.8" fill="#595959">Sep</text><text x="902.89" y="462.65" text-anchor="middle" font-size="6.8" fill="#595959">Oct</text><text x="940.61" y="462.65" text-anchor="middle" font-size="6.8" fill="#595959">Nov</text><text x="978.34" y="462.65" text-anchor="middle" font-size="6.8" fill="#595959">Dec</text><rect x="456.40" y="470.20" width="16.80" height="4.2" fill="#4472c4"/><text x="474.40" y="474.70" font-size="6.8" fill="#595959">Operating Cash Flows</text><text x="563.36" y="474.70" text-anchor="middle" font-size="6.8" fill="#595959">258,161</text><text x="601.09" y="474.70" text-anchor="middle" font-size="6.8" fill="#595959">338,961</text><text x="638.81" y="474.70" text-anchor="middle" font-size="6.8" fill="#595959">284,444</text><text x="676.54" y="474.70" text-anchor="middle" font-size="6.8" fill="#595959">356,168</text><text x="714.26" y="474.70" text-anchor="middle" font-size="6.8" fill="#595959">289,119</text><text x="751.99" y="474.70" text-anchor="middle" font-size="6.8" fill="#595959">309,719</text><text x="789.71" y="474.70" text-anchor="middle" font-size="6.8" fill="#595959">293,231</text><text x="827.44" y="474.70" text-anchor="middle" font-size="6.8" fill="#595959">309,186</text><text x="865.16" y="474.70" text-anchor="middle" font-size="6.8" fill="#595959">314,914</text><text x="902.89" y="474.70" text-anchor="middle" font-size="6.8" fill="#595959">350,697</text><text x="940.61" y="474.70" text-anchor="middle" font-size="6.8" fill="#595959">356,657</text><text x="978.34" y="474.70" text-anchor="middle" font-size="6.8" fill="#595959">358,157</text><rect x="456.40" y="482.40" width="16.80" height="4.2" fill="#ed7d31"/><text x="474.40" y="486.90" font-size="6.8" fill="#595959">Investing Cash Flows</text><text x="563.36" y="486.90" text-anchor="middle" font-size="6.8" fill="#595959">-45,000</text><text x="601.09" y="486.90" text-anchor="middle" font-size="6.8" fill="#595959">0</text><text x="638.81" y="486.90" text-anchor="middle" font-size="6.8" fill="#595959">0</text><text x="676.54" y="486.90" text-anchor="middle" font-size="6.8" fill="#595959">0</text><text x="714.26" y="486.90" text-anchor="middle" font-size="6.8" fill="#595959">0</text><text x="751.99" y="486.90" text-anchor="middle" font-size="6.8" fill="#595959">0</text><text x="789.71" y="486.90" text-anchor="middle" font-size="6.8" fill="#595959">0</text><text x="827.44" y="486.90" text-anchor="middle" font-size="6.8" fill="#595959">0</text><text x="865.16" y="486.90" text-anchor="middle" font-size="6.8" fill="#595959">0</text><text x="902.89" y="486.90" text-anchor="middle" font-size="6.8" fill="#595959">0</text><text x="940.61" y="486.90" text-anchor="middle" font-size="6.8" fill="#595959">0</text><text x="978.34" y="486.90" text-anchor="middle" font-size="6.8" fill="#595959">0</text><rect x="456.40" y="494.60" width="16.80" height="4.2" fill="#a5a5a5"/><text x="474.40" y="499.10" font-size="6.8" fill="#595959">Financing Cash Flows</text><text x="563.36" y="499.10" text-anchor="middle" font-size="6.8" fill="#595959">0</text><text x="601.09" y="499.10" text-anchor="middle" font-size="6.8" fill="#595959">-1,818</text><text x="638.81" y="499.10" text-anchor="middle" font-size="6.8" fill="#595959">-1,818</text><text x="676.54" y="499.10" text-anchor="middle" font-size="6.8" fill="#595959">-1,818</text><text x="714.26" y="499.10" text-anchor="middle" font-size="6.8" fill="#595959">-1,818</text><text x="751.99" y="499.10" text-anchor="middle" font-size="6.8" fill="#595959">-1,818</text><text x="789.71" y="499.10" text-anchor="middle" font-size="6.8" fill="#595959">-1,818</text><text x="827.44" y="499.10" text-anchor="middle" font-size="6.8" fill="#595959">-1,818</text><text x="865.16" y="499.10" text-anchor="middle" font-size="6.8" fill="#595959">-1,818</text><text x="902.89" y="499.10" text-anchor="middle" font-size="6.8" fill="#595959">-1,818</text><text x="940.61" y="499.10" text-anchor="middle" font-size="6.8" fill="#595959">-1,818</text><text x="978.34" y="499.10" text-anchor="middle" font-size="6.8" fill="#595959">-1,818</text><line x1="455.20" y1="508.90" x2="473.90" y2="508.90" stroke="#ffd966" stroke-width="2.1"/><text x="474.40" y="511.30" font-size="6.8" fill="#595959">Change In Cash Held</text><text x="563.36" y="511.30" text-anchor="middle" font-size="6.8" fill="#595959">-45,000</text><text x="601.09" y="511.30" text-anchor="middle" font-size="6.8" fill="#595959">338,961</text><text x="638.81" y="511.30" text-anchor="middle" font-size="6.8" fill="#595959">284,444</text><text x="676.54" y="511.30" text-anchor="middle" font-size="6.8" fill="#595959">356,168</text><text x="714.26" y="511.30" text-anchor="middle" font-size="6.8" fill="#595959">289,119</text><text x="751.99" y="511.30" text-anchor="middle" font-size="6.8" fill="#595959">309,719</text><text x="789.71" y="511.30" text-anchor="middle" font-size="6.8" fill="#595959">293,231</text><text x="827.44" y="511.30" text-anchor="middle" font-size="6.8" fill="#595959">309,186</text><text x="865.16" y="511.30" text-anchor="middle" font-size="6.8" fill="#595959">314,914</text><text x="902.89" y="511.30" text-anchor="middle" font-size="6.8" fill="#595959">350,697</text><text x="940.61" y="511.30" text-anchor="middle" font-size="6.8" fill="#595959">356,657</text><text x="978.34" y="511.30" text-anchor="middle" font-size="6.8" fill="#595959">358,157</text><line x1="455.20" y1="521.05" x2="473.90" y2="521.05" stroke="#2e75b6" stroke-width="2.1"/><text x="474.40" y="523.45" font-size="6.8" fill="#595959">Closing Cash</text><text x="563.36" y="523.45" text-anchor="middle" font-size="6.8" fill="#595959">426,322</text><text x="601.09" y="523.45" text-anchor="middle" font-size="6.8" fill="#595959">676,105</text><text x="638.81" y="523.45" text-anchor="middle" font-size="6.8" fill="#595959">567,070</text><text x="676.54" y="523.45" text-anchor="middle" font-size="6.8" fill="#595959">710,518</text><text x="714.26" y="523.45" text-anchor="middle" font-size="6.8" fill="#595959">576,421</text><text x="751.99" y="523.45" text-anchor="middle" font-size="6.8" fill="#595959">617,620</text><text x="789.71" y="523.45" text-anchor="middle" font-size="6.8" fill="#595959">584,643</text><text x="827.44" y="523.45" text-anchor="middle" font-size="6.8" fill="#595959">616,554</text><text x="865.16" y="523.45" text-anchor="middle" font-size="6.8" fill="#595959">628,010</text><text x="902.89" y="523.45" text-anchor="middle" font-size="6.8" fill="#595959">699,577</text><text x="940.61" y="523.45" text-anchor="middle" font-size="6.8" fill="#595959">711,496</text><text x="978.34" y="523.45" text-anchor="middle" font-size="6.8" fill="#595959">714,495</text></svg>
<div style="position:absolute;left:1011.00px;top:52.00px;width:13.00px;height:521.00px;background:#f3f3f3;border-left:1px solid #e3e3e3"></div>
<svg style="position:absolute;left:1014px;top:55.5px" width="8" height="6" viewBox="0 0 8 6"><path d="M4 0.5 L7.5 5 H0.5 Z" fill="#606060"/></svg>
<div style="position:absolute;left:1015.00px;top:63.50px;width:5.80px;height:155.40px;background:#7b7b7b;border-radius:3px"></div>
<svg style="position:absolute;left:1014px;top:565.5px" width="8" height="6" viewBox="0 0 8 6"><path d="M4 5.5 L7.5 1 H0.5 Z" fill="#606060"/></svg>
<div style="position:absolute;left:0.00px;top:572.50px;width:1024.00px;height:21.30px;background:#e9eaed"></div>
<svg style="position:absolute;left:16px;top:578px" width="6" height="9" viewBox="0 0 6 9"><path d="M5 0.8 L1.2 4.5 L5 8.2" fill="none" stroke="#9a9a9a" stroke-width="0.9"/></svg>
<svg style="position:absolute;left:37.5px;top:578px" width="6" height="9" viewBox="0 0 6 9"><path d="M1 0.8 L4.8 4.5 L1 8.2" fill="none" stroke="#444" stroke-width="0.9"/></svg>
<div style="position:absolute;left:75.00px;top:575.30px;width:42.00px;height:15.60px;background:#fdf98f;border-radius:3px"></div>
<div class="t" style="left:-4.00px;top:577.00px;width:200px;text-align:center;font-size:9.0px;color:#2b2b2b;font-weight:normal;line-height:12px">IS 2025</div>
<div style="position:absolute;left:119.50px;top:576.00px;width:0.80px;height:14.00px;background:#d6d6d6"></div>
<div class="t" style="left:45.00px;top:577.00px;width:200px;text-align:center;font-size:9.0px;color:#4a4a4a;font-weight:normal;line-height:12px">CF 2025</div>
<div style="position:absolute;left:170.00px;top:576.00px;width:0.80px;height:14.00px;background:#d6d6d6"></div>
<div class="t" style="left:95.00px;top:577.00px;width:200px;text-align:center;font-size:9.0px;color:#4a4a4a;font-weight:normal;line-height:12px">BS 2025</div>
<div style="position:absolute;left:220.00px;top:576.00px;width:0.80px;height:14.00px;background:#d6d6d6"></div>
<div style="position:absolute;left:223.20px;top:572.50px;width:124.50px;height:18.90px;background:#fff;border-radius:0 0 3px 3px"></div>
<div class="t" style="left:185.45px;top:575.60px;width:200px;text-align:center;font-size:9.3px;color:#1a1a1a;font-weight:normal;line-height:12px;-webkit-text-stroke:0.25px #1a1a1a">Statements Summary 2025</div>
<div style="position:absolute;left:229.00px;top:587.60px;width:113.40px;height:1.70px;background:#55a474"></div>
<div style="position:absolute;left:354.20px;top:575.30px;width:41.00px;height:15.60px;background:#fdf98f;border-radius:3px"></div>
<div class="t" style="left:274.70px;top:577.00px;width:200px;text-align:center;font-size:9.0px;color:#2b2b2b;font-weight:normal;line-height:12px">IS 2026</div>
<div style="position:absolute;left:401.90px;top:575.30px;width:91.70px;height:15.60px;background:#fdf98f;border-radius:3px"></div>
<div class="t" style="left:347.75px;top:577.00px;width:200px;text-align:center;font-size:9.0px;color:#2b2b2b;font-weight:normal;line-height:12px">COGS Assumptions</div>
<div style="position:absolute;left:497.70px;top:576.00px;width:0.80px;height:14.00px;background:#d6d6d6"></div>
<div class="t" style="left:422.00px;top:577.00px;width:200px;text-align:center;font-size:9.0px;color:#4a4a4a;font-weight:normal;line-height:12px">CF 2026</div>
<div style="position:absolute;left:547.00px;top:576.00px;width:0.80px;height:14.00px;background:#d6d6d6"></div>
<div class="t" style="left:472.50px;top:577.00px;width:200px;text-align:center;font-size:9.0px;color:#4a4a4a;font-weight:normal;line-height:12px">BS 2026</div>
<div style="position:absolute;left:598.00px;top:576.00px;width:0.80px;height:14.00px;background:#d6d6d6"></div>
<div class="t" style="left:562.50px;top:577.00px;width:200px;text-align:center;font-size:9.0px;color:#4a4a4a;font-weight:normal;line-height:12px">Statements Summary 2026</div>
<div style="position:absolute;left:727.00px;top:576.00px;width:0.80px;height:14.00px;background:#d6d6d6"></div>
<div style="position:absolute;left:730.00px;top:575.30px;width:42.00px;height:15.60px;background:#fdf98f;border-radius:3px"></div>
<div class="t" style="left:651.00px;top:577.00px;width:200px;text-align:center;font-size:9.0px;color:#2b2b2b;font-weight:normal;line-height:12px">IS 2027</div>
<div style="position:absolute;left:776.00px;top:576.00px;width:0.80px;height:14.00px;background:#d6d6d6"></div>
<div class="t" style="left:700.00px;top:577.00px;width:200px;text-align:center;font-size:9.0px;color:#4a4a4a;font-weight:normal;line-height:12px">CF 2027</div>
<div style="position:absolute;left:825.00px;top:576.00px;width:0.80px;height:14.00px;background:#d6d6d6"></div>
<div class="t" style="left:750.00px;top:577.00px;width:200px;text-align:center;font-size:9.0px;color:#4a4a4a;font-weight:normal;line-height:12px">BS 2027</div>
<div style="position:absolute;left:875.20px;top:576.00px;width:0.80px;height:14.00px;background:#d6d6d6"></div>
<div class="t" style="left:885.00px;top:577.00px;font-size:9.0px;color:#4a4a4a;font-weight:normal;line-height:12px">Stat</div>
<svg style="position:absolute;left:907px;top:580.5px" width="9" height="3" viewBox="0 0 9 3"><circle cx="1.3" cy="1.5" r="0.9" fill="#444"/><circle cx="4.5" cy="1.5" r="0.9" fill="#444"/><circle cx="7.7" cy="1.5" r="0.9" fill="#444"/></svg>
<svg style="position:absolute;left:928px;top:578px" width="9" height="9" viewBox="0 0 9 9"><path d="M4.5 0.5 V8.5 M0.5 4.5 H8.5" stroke="#444" stroke-width="0.9"/></svg>
<svg style="position:absolute;left:952.5px;top:578.5px" width="3" height="9" viewBox="0 0 3 9"><circle cx="1.5" cy="1.2" r="0.8" fill="#444"/><circle cx="1.5" cy="4.5" r="0.8" fill="#444"/><circle cx="1.5" cy="7.8" r="0.8" fill="#444"/></svg>
<div style="position:absolute;left:965.50px;top:575.50px;width:46.30px;height:15.00px;background:#f6f6f6;border-radius:7px"></div>
<svg style="position:absolute;left:968.5px;top:580px" width="5" height="6" viewBox="0 0 5 6"><path d="M4.5 0.3 V5.7 L0.5 3 Z" fill="#555"/></svg>
<div style="position:absolute;left:976.00px;top:579.80px;width:22.00px;height:6.20px;background:#7b7b7b;border-radius:3px"></div>
<svg style="position:absolute;left:1004px;top:580px" width="5" height="6" viewBox="0 0 5 6"><path d="M0.5 0.3 V5.7 L4.5 3 Z" fill="#555"/></svg>
<div style="position:absolute;left:0.00px;top:593.80px;width:1024.00px;height:11.20px;background:#f3f3f3"></div>
<div class="t" style="left:7.80px;top:597.00px;font-size:6.5px;color:#444;font-weight:normal;line-height:10px">Ready</div>
<svg style="position:absolute;left:40px;top:596px" width="10" height="9" viewBox="0 0 10 9"><rect x="0.5" y="0.5" width="9" height="8.5" fill="#9a9a9a" stroke="#555" stroke-width="0.8"/><circle cx="6" cy="5.6" r="2.2" fill="#eee" stroke="#444" stroke-width="0.8"/><circle cx="6" cy="5.6" r="0.9" fill="#333"/></svg>
<svg style="position:absolute;left:61px;top:595.5px" width="10" height="10" viewBox="0 0 10 10"><circle cx="5" cy="1.8" r="1.2" fill="none" stroke="#444" stroke-width="0.7"/><path d="M1 3.5 H9 M5 3.5 V6 L3 9.5 M5 6 L7 9.5" fill="none" stroke="#444" stroke-width="0.7"/></svg>
<div class="t" style="left:73.20px;top:597.00px;font-size:6.8px;color:#333;font-weight:bold;line-height:10px">Accessibility: Investigate</div>
<div style="position:absolute;left:826.40px;top:594.00px;width:26.00px;height:11.00px;background:#dcdcdc"></div>
<svg style="position:absolute;left:834px;top:596px" width="10" height="9" viewBox="0 0 10 9"><path d="M0.5 0.5 H9.5 V8.5 H0.5 Z M0.5 3.2 H9.5 M0.5 5.9 H9.5 M3.5 0.5 V8.5 M6.5 0.5 V8.5" fill="none" stroke="#444" stroke-width="0.7"/></svg>
<svg style="position:absolute;left:861px;top:596px" width="10" height="9" viewBox="0 0 10 9"><rect x="0.5" y="0.5" width="9" height="8" fill="none" stroke="#555" stroke-width="0.7"/><rect x="2.8" y="2.3" width="4.4" height="4.4" fill="none" stroke="#555" stroke-width="0.7"/></svg>
<svg style="position:absolute;left:888px;top:596px" width="10" height="9" viewBox="0 0 10 9"><path d="M0.5 8.5 V0.5 H9.5 V8.5 M0.5 5.5 H5 V0.5" fill="none" stroke="#555" stroke-width="0.7"/></svg>
<div style="position:absolute;left:909.50px;top:599.50px;width:4.50px;height:0.80px;background:#666"></div>
<div style="position:absolute;left:918.60px;top:599.60px;width:66.40px;height:0.70px;background:#777"></div>
<div style="position:absolute;left:949.50px;top:597.00px;width:2.20px;height:8.00px;background:#555"></div>
<svg style="position:absolute;left:986.5px;top:596.5px" width="7" height="7" viewBox="0 0 7 7"><path d="M3.5 0.5 V6.5 M0.5 3.5 H6.5" stroke="#666" stroke-width="0.8"/></svg>
<div class="t" style="left:1002.00px;top:597.00px;font-size:6.8px;color:#444;font-weight:normal;line-height:10px">96%</div>
</body></html>
